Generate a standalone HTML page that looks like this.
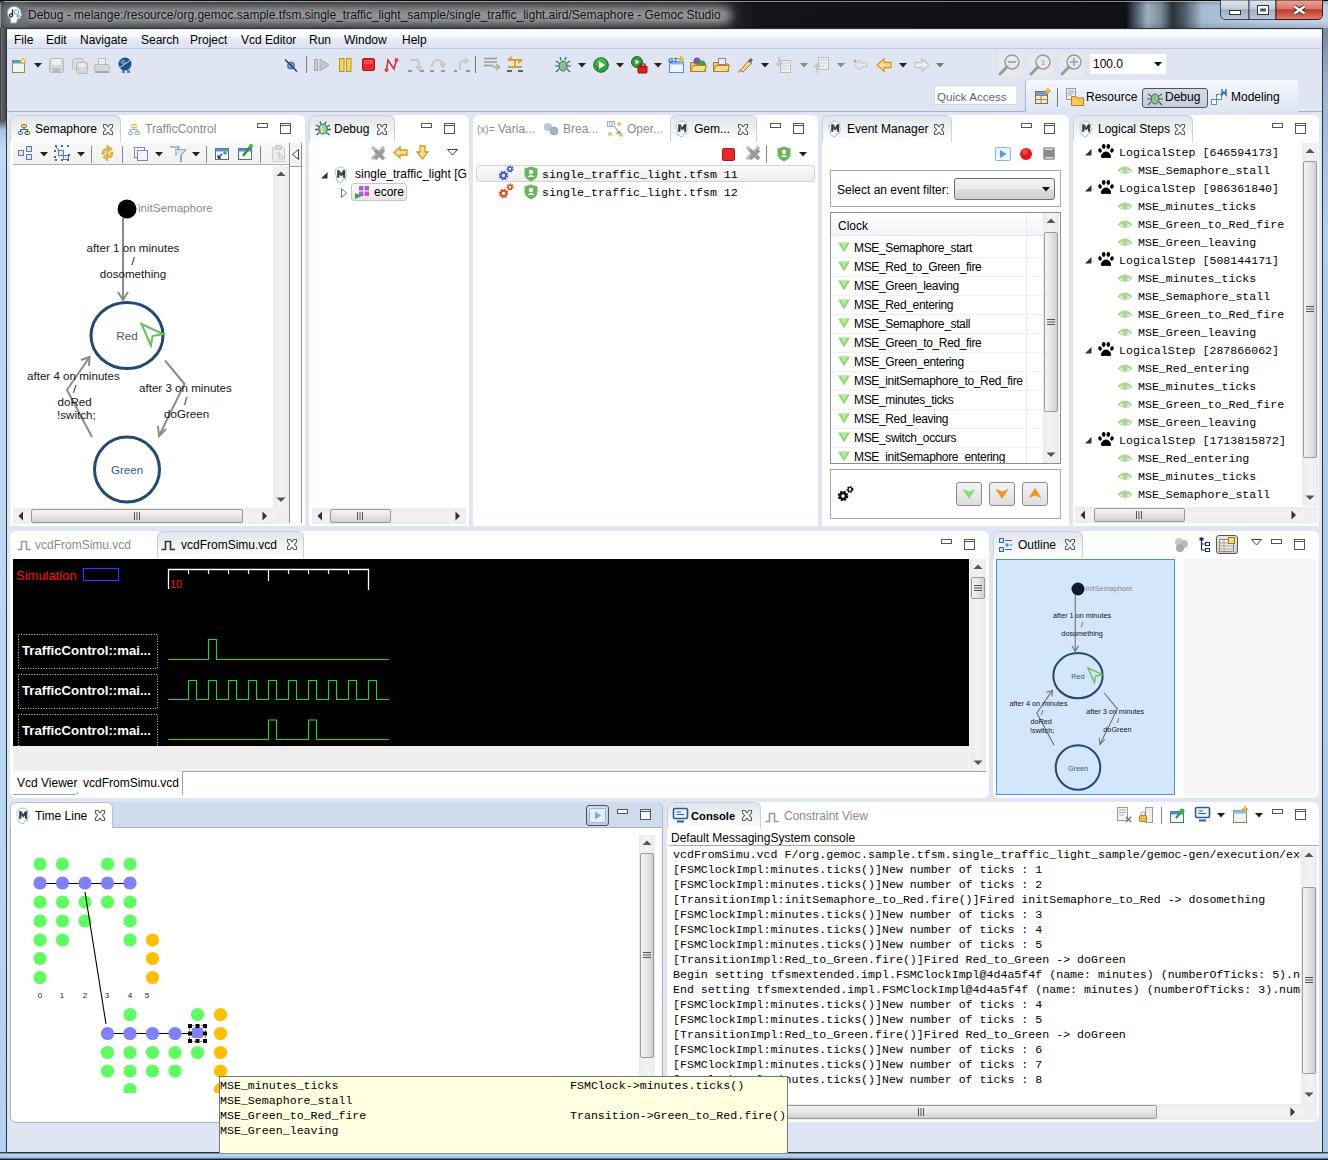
<!DOCTYPE html>
<html><head><meta charset="utf-8">
<style>
*{box-sizing:border-box;margin:0;padding:0}
html,body{width:1328px;height:1160px;overflow:hidden;background:#dfe5f3;font-family:"Liberation Sans",sans-serif;font-size:12px;color:#000}
.a{position:absolute}
.t{white-space:pre}
.panel{position:absolute;background:#fff;border-radius:6px 6px 0 0}
.tabact{border-radius:6px 6px 0 0;background:linear-gradient(180deg,#e2e4ea 0,#eef0f3 45%,#fff 100%);border:1px solid #cdd1db;border-bottom:none}
svg{overflow:visible}
</style></head><body>
<div class="a" style="left:0px;top:0px;width:1328px;height:30px;background:linear-gradient(90deg,#45484d 0%,#3f4247 40%,#34373b 53.5%,#1e2023 55.5%,#121417 57%,#0f1114 84.8%,#556270 85.6%,#9fb0c0 86.4%,#7d8c9a 87.4%,#2c333b 88.3%,#4f5d6a 89.2%,#a6bbd0 90.5%,#b6cce3 95%,#bcd2ea 100%)"></div>
<div class="a" style="left:0px;top:0px;width:1328px;height:30px;background:linear-gradient(180deg,rgba(0,0,0,.25) 0,rgba(0,0,0,0) 6px,rgba(0,0,0,0) 22px,rgba(0,0,0,.2) 30px)"></div>
<div class="a" style="left:16px;top:7px;width:716px;height:17px;background:#8e8f91;filter:blur(4px);border-radius:8px"></div>
<div class="a" style="left:1px;top:3px;width:28px;height:25px;background:#6e7176;filter:blur(3px);border-radius:8px"></div>
<div class="a" style="left:0px;top:0px;width:1328px;height:1px;background:#0a0a0a"></div>
<div class="a" style="left:4px;top:1px;width:1216px;height:1px;background:rgba(235,238,242,.55)"></div>
<div class="a" style="left:0px;top:3px;width:1px;height:26px;background:rgba(220,225,230,.45)"></div>
<div class="a t" style="left:28px;top:7.5px;height:15px;line-height:15px;font-size:12px;color:#111;font-weight:normal;font-family:'Liberation Sans',sans-serif;text-shadow:0 0 6px rgba(220,220,220,.8)">Debug - melange:/resource/org.gemoc.sample.tfsm.single_traffic_light_sample/single_traffic_light.aird/Semaphore - Gemoc Studio</div>
<svg class="a" style="left:6px;top:5px;" width="17" height="19" viewBox="0 0 17 19"><path d="M8 1.5 C12.5 1.5 15 4.5 15 8 L16 10.5 L14.5 11 L14.5 13.5 L11.5 14 L10.5 18 L4.5 18 L4.5 14 C2.5 12.5 1.5 10.5 1.5 8 C1.5 4 4 1.5 8 1.5Z" fill="#fbfdff" stroke="#7eaac8" stroke-width="0.9"/><path d="M6.5 4.5 V11" stroke="#222" stroke-width="1.3"/><circle cx="5" cy="10.5" r="1.6" fill="none" stroke="#222" stroke-width="1.1"/><circle cx="10.5" cy="7" r="2.2" fill="none" stroke="#6a9ac0" stroke-width="1"/><circle cx="12" cy="11" r="1.3" fill="none" stroke="#6a9ac0" stroke-width=".9"/></svg>
<svg class="a" style="left:1220px;top:0px;" width="103" height="20" viewBox="0 0 103 20">
<defs><linearGradient id="wb" x1="0" y1="0" x2="0" y2="1"><stop offset="0" stop-color="#dfe6ee"/><stop offset="0.45" stop-color="#c3cfdc"/><stop offset="0.5" stop-color="#9fb0c4"/><stop offset="1" stop-color="#b9c9da"/></linearGradient>
<linearGradient id="wc" x1="0" y1="0" x2="0" y2="1"><stop offset="0" stop-color="#eaa89c"/><stop offset="0.45" stop-color="#d8786a"/><stop offset="0.5" stop-color="#c0392b"/><stop offset="1" stop-color="#e0806a"/></linearGradient></defs>
<path d="M0.5 0 V14 Q0.5 19.5 6 19.5 H29 V0Z" fill="url(#wb)" stroke="#3d4550" stroke-width="1"/>
<rect x="29" y="0" width="27" height="19.5" fill="url(#wb)" stroke="#3d4550" stroke-width="1"/>
<path d="M56 0 V19.5 H97 Q102.5 19.5 102.5 14 V0Z" fill="url(#wc)" stroke="#3d1a14" stroke-width="1"/>
<rect x="9.5" y="10.5" width="11" height="4" fill="#fff" stroke="#333" stroke-width="1"/>
<rect x="37.5" y="5.5" width="11" height="9" fill="#fff" stroke="#333" stroke-width="1"/><rect x="40" y="8.5" width="6" height="3" fill="#4a5a70"/>
<path d="M74.5 6.5 L84.5 13.5 M84.5 6.5 L74.5 13.5" stroke="#3a3030" stroke-width="4"/><path d="M74.5 6.5 L84.5 13.5 M84.5 6.5 L74.5 13.5" stroke="#fff" stroke-width="2.2"/>
</svg>
<div class="a" style="left:0px;top:28px;width:7px;height:92px;background:linear-gradient(90deg,#2a2c30 0,#6a6e74 1.5px,#55595f 3px,#45494f 100%)"></div>
<div class="a" style="left:0px;top:120px;width:7px;height:1040px;background:linear-gradient(180deg,#4a4f56 0,#a8c8e8 10px,#bddaf4 30px,#b5d3f0 100%)"></div>
<div class="a" style="left:1322px;top:28px;width:6px;height:1132px;background:linear-gradient(180deg,#79889a 0,#9db6d0 60px,#b0cfee 200px,#a9c8e8 100%)"></div>
<div class="a" style="left:0px;top:1152px;width:1328px;height:8px;background:linear-gradient(180deg,#3a4450 0,#3a4450 1px,#bcdaf5 2px,#a2c2e2 6px,#222 7px)"></div>
<div class="a" style="left:6px;top:28px;width:1317px;height:1125px;border:1px solid #28323c;background:#dfe5f3"></div>
<div class="a" style="left:7px;top:30px;width:1315px;height:19px;background:linear-gradient(180deg,#ffffff 0,#f7f8fc 35%,#e4e8f4 55%,#dde3f1 100%);border-bottom:1px solid #c2cadb"></div>
<div class="a t" style="left:14px;top:32.5px;height:15px;line-height:15px;font-size:12px;color:#000;font-weight:normal;font-family:'Liberation Sans',sans-serif;">File</div>
<div class="a t" style="left:46px;top:32.5px;height:15px;line-height:15px;font-size:12px;color:#000;font-weight:normal;font-family:'Liberation Sans',sans-serif;">Edit</div>
<div class="a t" style="left:80px;top:32.5px;height:15px;line-height:15px;font-size:12px;color:#000;font-weight:normal;font-family:'Liberation Sans',sans-serif;">Navigate</div>
<div class="a t" style="left:141px;top:32.5px;height:15px;line-height:15px;font-size:12px;color:#000;font-weight:normal;font-family:'Liberation Sans',sans-serif;">Search</div>
<div class="a t" style="left:190px;top:32.5px;height:15px;line-height:15px;font-size:12px;color:#000;font-weight:normal;font-family:'Liberation Sans',sans-serif;">Project</div>
<div class="a t" style="left:241px;top:32.5px;height:15px;line-height:15px;font-size:12px;color:#000;font-weight:normal;font-family:'Liberation Sans',sans-serif;">Vcd Editor</div>
<div class="a t" style="left:309px;top:32.5px;height:15px;line-height:15px;font-size:12px;color:#000;font-weight:normal;font-family:'Liberation Sans',sans-serif;">Run</div>
<div class="a t" style="left:344px;top:32.5px;height:15px;line-height:15px;font-size:12px;color:#000;font-weight:normal;font-family:'Liberation Sans',sans-serif;">Window</div>
<div class="a t" style="left:402px;top:32.5px;height:15px;line-height:15px;font-size:12px;color:#000;font-weight:normal;font-family:'Liberation Sans',sans-serif;">Help</div>
<div class="a" style="left:7px;top:111px;width:1019px;height:1px;background:#a9b2c3"></div>
<svg class="a" style="left:12px;top:58px;" width="15" height="15" viewBox="0 0 15 15"><rect x="0.5" y="2.5" width="12" height="12" fill="#eef6fc" stroke="#a08a40"/><rect x="0.5" y="2.5" width="12" height="3" fill="#5a9ad6"/><path d="M11 0 L11 6 M8 3 L14 3" stroke="#e8b830" stroke-width="2.4"/><path d="M11 1 L11 5 M9 3 L13 3" stroke="#fff6c0" stroke-width="1"/></svg>
<svg class="a" style="left:34px;top:63px;" width="8" height="5" viewBox="0 0 8 5"><path d="M0 0 L8 0 L4 4.5 Z" fill="#222"/></svg>
<svg class="a" style="left:49px;top:58px;" width="15" height="15" viewBox="0 0 15 15"><rect x="0.5" y="0.5" width="14" height="14" rx="2" fill="#d6d6d6" stroke="#b8b8b8"/><rect x="3" y="1" width="9" height="6" fill="#f0f0f0"/><rect x="4" y="10" width="7" height="4" fill="#bbb"/></svg>
<svg class="a" style="left:72px;top:58px;" width="16" height="16" viewBox="0 0 16 16"><rect x="0.5" y="0.5" width="11" height="11" rx="2" fill="#ddd" stroke="#bbb"/><rect x="4.5" y="4.5" width="11" height="11" rx="2" fill="#d6d6d6" stroke="#b8b8b8"/><rect x="7" y="5" width="6" height="4" fill="#f0f0f0"/></svg>
<svg class="a" style="left:94px;top:58px;" width="16" height="16" viewBox="0 0 16 16"><rect x="4.5" y="0.5" width="7" height="7" fill="#eee" stroke="#bbb"/><rect x="0.5" y="6.5" width="15" height="7" rx="2" fill="#d8d8d8" stroke="#b8b8b8"/><rect x="1" y="13" width="14" height="2" fill="#aaa"/></svg>
<svg class="a" style="left:117px;top:57px;" width="17" height="17" viewBox="0 0 17 17"><circle cx="8" cy="7" r="6.5" fill="#1f4f8c"/><circle cx="6" cy="5" r="2.5" fill="#6a9ad0" opacity=".8"/><path d="M1 12 L15 2" stroke="#cfe0f0" stroke-width="1"/><rect x="5" y="13" width="3" height="3" fill="#5a80b8"/><rect x="10" y="13" width="3" height="3" fill="#5a80b8"/></svg>
<svg class="a" style="left:284px;top:58px;" width="14" height="14" viewBox="0 0 14 14"><circle cx="7" cy="7.5" r="3.5" fill="#6aa0c0" stroke="#3a6a90"/><path d="M1 1.5 L13 13.5" stroke="#1d3d8c" stroke-width="1.6"/></svg>
<div class="a" style="left:306px;top:56px;width:1px;height:17px;background:#777"></div>
<svg class="a" style="left:314px;top:58px;" width="16" height="14" viewBox="0 0 16 14"><rect x="0.5" y="1.5" width="3" height="11" fill="#ccc" stroke="#aaa"/><path d="M6 1 L15 7 L6 13Z" fill="#c6c6c6" stroke="#aaa"/></svg>
<svg class="a" style="left:339px;top:58px;" width="13" height="14" viewBox="0 0 13 14"><rect x="0.5" y="0.5" width="4.5" height="13" fill="#f3d75a" stroke="#b8941c"/><rect x="7.5" y="0.5" width="4.5" height="13" fill="#f3d75a" stroke="#b8941c"/></svg>
<svg class="a" style="left:362px;top:58px;" width="13" height="13" viewBox="0 0 13 13"><rect x="0.5" y="0.5" width="12" height="12" rx="1.5" fill="#e8282a" stroke="#a81818"/><rect x="2" y="2" width="9" height="4" fill="#f86a6a" opacity=".6"/></svg>
<svg class="a" style="left:384px;top:57px;" width="15" height="16" viewBox="0 0 15 16"><path d="M2.5 13 L4 3 L10 12 L12.5 3" fill="none" stroke="#d8282a" stroke-width="1.5"/><circle cx="2.5" cy="13" r="2" fill="#e84040"/><circle cx="12.5" cy="3" r="2" fill="#e84040"/></svg>
<svg class="a" style="left:408px;top:58px;" width="16" height="14" viewBox="0 0 16 14"><path d="M2 2 H8 Q11 2 11 6 V10" fill="none" stroke="#c8c8c8" stroke-width="2"/><path d="M8 8 L11 12 L14 8" fill="none" stroke="#c8c8c8" stroke-width="2"/><rect x="0" y="12" width="4" height="2" fill="#999"/><rect x="12" y="12" width="4" height="2" fill="#999"/></svg>
<svg class="a" style="left:430px;top:58px;" width="16" height="14" viewBox="0 0 16 14"><path d="M2 9 Q2 2 8 2 Q13 2 13 7" fill="none" stroke="#c8c8c8" stroke-width="2"/><path d="M10 5 L13 9 L16 5" fill="none" stroke="#c8c8c8" stroke-width="2"/><rect x="0" y="12" width="4" height="2" fill="#999"/><rect x="11" y="12" width="4" height="2" fill="#999"/></svg>
<svg class="a" style="left:454px;top:58px;" width="16" height="14" viewBox="0 0 16 14"><path d="M6 12 V7 Q6 3 10 3 H13" fill="none" stroke="#c8c8c8" stroke-width="2"/><path d="M11 0 L14 3 L11 6" fill="none" stroke="#c8c8c8" stroke-width="2"/><rect x="0" y="12" width="3" height="2" fill="#999"/><rect x="12" y="12" width="4" height="2" fill="#999"/></svg>
<div class="a" style="left:475px;top:56px;width:1px;height:17px;background:#777"></div>
<svg class="a" style="left:484px;top:57px;" width="17" height="16" viewBox="0 0 17 16"><path d="M0 1.5 H13 M0 5 H13 M0 8.5 H9" stroke="#999" stroke-width="1.6"/><path d="M9 10 H15 M12 7 L15.5 10 L12 13" fill="none" stroke="#aaa" stroke-width="1.6"/></svg>
<svg class="a" style="left:507px;top:57px;" width="17" height="16" viewBox="0 0 17 16"><path d="M1 3 H15 M1 3 L5 0 M15 3 L11 6 M1 10 H15" fill="none" stroke="#d8a020" stroke-width="1.8"/><path d="M8 3 V10" stroke="#d8a020" stroke-width="1.8"/><rect x="0" y="13" width="5" height="2" fill="#3a68a8"/><rect x="11" y="13" width="5" height="2" fill="#3a68a8"/></svg>
<svg class="a" style="left:555px;top:57px;" width="16" height="16" viewBox="0 0 16 16"><ellipse cx="8" cy="9" rx="4" ry="5" fill="#8cc08a" stroke="#2c6a5a"/><path d="M1 4 L4 6 M15 4 L12 6 M0 9 H4 M16 9 H12 M1 15 L4 12 M15 15 L12 12 M6 3 L5 0 M10 3 L11 0" stroke="#2c6a5a" stroke-width="1.2"/></svg>
<svg class="a" style="left:578px;top:63px;" width="8" height="5" viewBox="0 0 8 5"><path d="M0 0 L8 0 L4 4.5 Z" fill="#222"/></svg>
<svg class="a" style="left:593px;top:57px;" width="16" height="16" viewBox="0 0 16 16"><circle cx="8" cy="8" r="7.3" fill="#2ea03a" stroke="#1a6a24"/><circle cx="8" cy="6" r="5" fill="#5ccf5a" opacity=".5"/><path d="M6 4 L12 8 L6 12Z" fill="#fff"/></svg>
<svg class="a" style="left:616px;top:63px;" width="8" height="5" viewBox="0 0 8 5"><path d="M0 0 L8 0 L4 4.5 Z" fill="#222"/></svg>
<svg class="a" style="left:631px;top:56px;" width="17" height="18" viewBox="0 0 17 18"><circle cx="6" cy="6" r="5.5" fill="#2ea03a" stroke="#1a6a24"/><path d="M4.5 3.5 L8.5 6 L4.5 8.5Z" fill="#fff"/><rect x="7" y="10" width="9" height="7" rx="1" fill="#e02020" stroke="#901010"/><rect x="9" y="8" width="5" height="3" fill="none" stroke="#901010"/></svg>
<svg class="a" style="left:654px;top:63px;" width="8" height="5" viewBox="0 0 8 5"><path d="M0 0 L8 0 L4 4.5 Z" fill="#222"/></svg>
<svg class="a" style="left:668px;top:56px;" width="17" height="17" viewBox="0 0 17 17"><rect x="1.5" y="5.5" width="14" height="11" fill="#eef6fd" stroke="#5a8ac8"/><rect x="1.5" y="5.5" width="14" height="3" fill="#8ab8e8"/><text x="0" y="7" font-size="7" font-family="Liberation Sans" font-weight="bold" fill="#2a6ad0">GT</text><path d="M13 0 V6 M10 3 H16" stroke="#e8b830" stroke-width="2"/></svg>
<svg class="a" style="left:690px;top:57px;" width="17" height="15" viewBox="0 0 17 15"><path d="M0.5 5.5 H6 L7 7 H15.5 V14.5 H0.5Z" fill="#f0c860" stroke="#b08020"/><circle cx="7" cy="4" r="3.5" fill="#7a58b0"/><circle cx="12" cy="7" r="3.5" fill="#3aa040"/><path d="M0.5 14.5 L3 8.5 H16.5 L14.5 14.5Z" fill="#f8dc88" stroke="#b08020"/></svg>
<svg class="a" style="left:713px;top:58px;" width="17" height="14" viewBox="0 0 17 14"><path d="M0.5 4.5 H6 L7 6 H15.5 V13.5 H0.5Z" fill="#f0c860" stroke="#b08020"/><rect x="5.5" y="0.5" width="7" height="6" fill="#eee" stroke="#888"/><path d="M0.5 13.5 L3 7.5 H16.5 L14.5 13.5Z" fill="#f8dc88" stroke="#b08020"/></svg>
<svg class="a" style="left:737px;top:57px;" width="17" height="17" viewBox="0 0 17 17"><path d="M1 16 L4 12" stroke="#d8b070" stroke-width="2"/><path d="M3 14 L12 3 L15 6 L6 15Z" fill="#f0d890" stroke="#a88040"/><path d="M11 4 L14 1 L16 3 L13 6Z" fill="#666"/></svg>
<svg class="a" style="left:761px;top:63px;" width="8" height="5" viewBox="0 0 8 5"><path d="M0 0 L8 0 L4 4.5 Z" fill="#222"/></svg>
<svg class="a" style="left:776px;top:57px;" width="16" height="16" viewBox="0 0 16 16"><rect x="4.5" y="3.5" width="10" height="12" fill="#f0f0f0" stroke="#bbb"/><path d="M5 6 H13 M5 9 H13 M5 12 H11" stroke="#ccc"/><path d="M3 0 V9 M0 6 L3 9 L6 6" fill="none" stroke="#c8c8c8" stroke-width="2"/></svg>
<svg class="a" style="left:800px;top:63px;" width="8" height="5" viewBox="0 0 8 5"><path d="M0 0 L8 0 L4 4.5 Z" fill="#888"/></svg>
<svg class="a" style="left:814px;top:57px;" width="16" height="16" viewBox="0 0 16 16"><rect x="4.5" y="0.5" width="10" height="12" fill="#f0f0f0" stroke="#bbb"/><path d="M5 3 H13 M5 6 H13 M5 9 H11" stroke="#ccc"/><path d="M3 16 V7 M0 10 L3 7 L6 10" fill="none" stroke="#c8c8c8" stroke-width="2"/></svg>
<svg class="a" style="left:837px;top:63px;" width="8" height="5" viewBox="0 0 8 5"><path d="M0 0 L8 0 L4 4.5 Z" fill="#888"/></svg>
<svg class="a" style="left:852px;top:58px;" width="16" height="14" viewBox="0 0 16 14"><path d="M8 2 L2 7 L8 12 V9 H15 V5 H8Z" fill="#e8e8e8" stroke="#c4c4c4"/><circle cx="3" cy="3" r="1.5" fill="#aaa"/></svg>
<svg class="a" style="left:876px;top:58px;" width="16" height="14" viewBox="0 0 16 14"><path d="M8 1 L1 7 L8 13 V9.5 H15 V4.5 H8Z" fill="#fbe09a" stroke="#d89818" stroke-width="1.3"/></svg>
<svg class="a" style="left:899px;top:63px;" width="8" height="5" viewBox="0 0 8 5"><path d="M0 0 L8 0 L4 4.5 Z" fill="#222"/></svg>
<svg class="a" style="left:914px;top:58px;" width="16" height="14" viewBox="0 0 16 14"><path d="M8 1 L15 7 L8 13 V9.5 H1 V4.5 H8Z" fill="#f0f0f0" stroke="#c4c4c4" stroke-width="1.3"/></svg>
<svg class="a" style="left:936px;top:63px;" width="8" height="5" viewBox="0 0 8 5"><path d="M0 0 L8 0 L4 4.5 Z" fill="#777"/></svg>
<div class="a" style="left:998px;top:53px;width:24px;height:24px;background:#e8e8ee"></div>
<svg class="a" style="left:998px;top:53px;" width="24" height="24" viewBox="0 0 24 24"><circle cx="14" cy="9" r="7" fill="none" stroke="#9a9a9a" stroke-width="1.5"/><path d="M9 14 L2 21" stroke="#9a9a9a" stroke-width="3" stroke-linecap="round"/><path d="M10 9 H18" stroke="#9a9a9a" stroke-width="1.5"/></svg>
<div class="a" style="left:1029px;top:53px;width:24px;height:24px;background:#e8e8ee"></div>
<svg class="a" style="left:1029px;top:53px;" width="24" height="24" viewBox="0 0 24 24"><circle cx="14" cy="9" r="7" fill="none" stroke="#9a9a9a" stroke-width="1.5"/><path d="M9 14 L2 21" stroke="#9a9a9a" stroke-width="3" stroke-linecap="round"/><text x="12" y="12" font-size="8" font-family="Liberation Sans" fill="#9a9a9a">1</text></svg>
<div class="a" style="left:1060px;top:53px;width:24px;height:24px;background:#e8e8ee"></div>
<svg class="a" style="left:1060px;top:53px;" width="24" height="24" viewBox="0 0 24 24"><circle cx="14" cy="9" r="7" fill="none" stroke="#9a9a9a" stroke-width="1.5"/><path d="M9 14 L2 21" stroke="#9a9a9a" stroke-width="3" stroke-linecap="round"/><path d="M10 9 H18 M14 5 V13" stroke="#9a9a9a" stroke-width="1.5"/></svg>
<div class="a" style="left:1089px;top:53px;width:78px;height:22px;background:#fff;border:1px solid #e3e6ee"></div>
<div class="a t" style="left:1093px;top:56.5px;height:15px;line-height:15px;font-size:12px;color:#000;font-weight:normal;font-family:'Liberation Sans',sans-serif;">100.0</div>
<svg class="a" style="left:1154px;top:62px;" width="8" height="5" viewBox="0 0 8 5"><path d="M0 0 L8 0 L4 4.5 Z" fill="#111"/></svg>
<div class="a" style="left:934px;top:85px;width:83px;height:20px;background:#fff;border:1px solid #d0d6e4;border-right:1px solid #e0e4ee"></div>
<div class="a t" style="left:937px;top:89.0px;height:15px;line-height:15px;font-size:11.6px;color:#5a6478;font-weight:normal;font-family:'Liberation Sans',sans-serif;">Quick Access</div>
<div class="a" style="left:1025px;top:80px;width:273px;height:32px;background:linear-gradient(180deg,#f6f8fd,#e9edf8 50%,#dfe5f3);border-left:1px solid #a9b2c3;border-radius:3px 0 0 0"></div>
<div class="a" style="left:1298px;top:111px;width:24px;height:1px;background:#a9b2c3"></div>
<svg class="a" style="left:1035px;top:88px;" width="16" height="16" viewBox="0 0 16 16"><rect x="0.5" y="3.5" width="12" height="12" fill="#f4ead0" stroke="#8a7030"/><path d="M0.5 7.5 H12.5 M6 7.5 V15.5 M0.5 11.5 H12.5" stroke="#8a7030" stroke-width=".8"/><rect x="1" y="4" width="11" height="3" fill="#6aa0d8"/><path d="M13 0 V6 M10 3 H16" stroke="#e8b830" stroke-width="2"/></svg>
<div class="a" style="left:1057px;top:88px;width:1px;height:19px;background:#777"></div>
<svg class="a" style="left:1066px;top:88px;" width="18" height="18" viewBox="0 0 18 18"><rect x="0.5" y="0.5" width="9" height="11" fill="#eee" stroke="#999"/><path d="M2 3 H8 M2 5 H8 M2 7 H6" stroke="#7a9ad0" stroke-width=".8"/><path d="M5.5 8.5 H10 L11 10 H17.5 V17.5 H5.5Z" fill="#f8c850" stroke="#b88020"/></svg>
<div class="a t" style="left:1086px;top:89.5px;height:15px;line-height:15px;font-size:12px;color:#000;font-weight:normal;font-family:'Liberation Sans',sans-serif;">Resource</div>
<div class="a" style="left:1142px;top:88px;width:66px;height:20px;background:linear-gradient(180deg,#d6dbe6,#c6ccd9);border:1px solid #4f5562;border-radius:3px"></div>
<svg class="a" style="left:1146px;top:89px;" width="17" height="17" viewBox="0 0 17 17"><ellipse cx="9" cy="10" rx="4" ry="5" fill="#8cc08a" stroke="#2c6a5a"/><path d="M2 5 L5 7 M16 5 L13 7 M1 10 H5 M17 10 H13 M2 16 L5 13 M16 16 L13 13" stroke="#2c6a5a" stroke-width="1.2"/></svg>
<div class="a t" style="left:1165px;top:90.0px;height:15px;line-height:15px;font-size:12px;color:#000;font-weight:normal;font-family:'Liberation Sans',sans-serif;">Debug</div>
<svg class="a" style="left:1210px;top:88px;" width="20" height="19" viewBox="0 0 20 19"><rect x="1.5" y="11.5" width="5" height="5" fill="#fff" stroke="#5a8ac8"/><rect x="6.5" y="6.5" width="5" height="5" fill="#fff" stroke="#5a8ac8"/><path d="M12 1 V7 L14 4 L16 7 V1" fill="none" stroke="#2a5aa8" stroke-width="1.3"/></svg>
<div class="a t" style="left:1231px;top:89.5px;height:15px;line-height:15px;font-size:12px;color:#000;font-weight:normal;font-family:'Liberation Sans',sans-serif;">Modeling</div>
<div class="panel" style="left:10px;top:115px;width:295px;height:411px;border-radius:6px 6px 0 0"></div>
<div class="panel" style="left:309px;top:115px;width:160px;height:411px;border-radius:6px 6px 0 0"></div>
<div class="panel" style="left:473px;top:115px;width:345px;height:411px;border-radius:6px 6px 0 0"></div>
<div class="panel" style="left:822px;top:115px;width:247px;height:411px;border-radius:6px 6px 0 0"></div>
<div class="panel" style="left:1073px;top:115px;width:246px;height:411px;border-radius:6px 6px 0 0"></div>
<div class="panel" style="left:10px;top:531px;width:979px;height:267px;border-radius:6px"></div>
<div class="panel" style="left:993px;top:531px;width:326px;height:267px;border-radius:6px"></div>
<div class="panel" style="left:10px;top:802px;width:652px;height:320px;border-radius:6px"></div>
<div class="a" style="left:10px;top:802px;width:653px;height:321px;border:1px solid #a9b2c6;border-radius:6px"></div>
<div class="panel" style="left:667px;top:802px;width:652px;height:320px;border-radius:6px"></div>
<div class="a tabact" style="left:10px;top:115px;width:111px;height:27px"></div>
<svg class="a" style="left:18px;top:124px;" width="12" height="11" viewBox="0 0 12 11"><rect x="3.5" y="0.5" width="5" height="3" rx="1" fill="#f8d050" stroke="#a87818"/><path d="M6 3.5 V5.5 M2.5 5.5 H9.5 M2.5 5.5 V7 M9.5 5.5 V7" fill="none" stroke="#3a5aa0"/><rect x="0.5" y="7.5" width="4" height="3" rx="1" fill="#c8dcf0" stroke="#3a5aa0"/><rect x="7" y="7.5" width="4.5" height="3" rx="1" fill="#e8e040" stroke="#1a7a30"/></svg>
<div class="a t" style="left:35px;top:121.5px;height:15px;line-height:15px;font-size:12px;color:#000;font-weight:normal;font-family:'Liberation Sans',sans-serif;">Semaphore</div>
<svg class="a" style="left:101.5px;top:124px;" width="12" height="12" viewBox="0 0 12 12"><path d="M1.5 0.5 H4 L6 2.8 L8 0.5 H10.5 V3 L8.3 5.5 L10.5 8 V10.5 H8 L6 8.2 L4 10.5 H1.5 V8 L3.7 5.5 L1.5 3Z" fill="#fff" stroke="#5e5e5e" stroke-width="1.1"/></svg>
<svg class="a" style="left:128px;top:124px;" width="12" height="11" viewBox="0 0 12 11"><rect x="3.5" y="0.5" width="5" height="3" rx="1" fill="#fbe8a8" stroke="#d8b868"/><path d="M6 3.5 V5.5 M2.5 5.5 H9.5 M2.5 5.5 V7 M9.5 5.5 V7" fill="none" stroke="#98acd0"/><rect x="0.5" y="7.5" width="4" height="3" rx="1" fill="#e0ecf8" stroke="#98acd0"/><rect x="7" y="7.5" width="4.5" height="3" rx="1" fill="#f0ec98" stroke="#88c098"/></svg>
<div class="a t" style="left:145px;top:121.5px;height:15px;line-height:15px;font-size:12px;color:#8a8a8a;font-weight:normal;font-family:'Liberation Sans',sans-serif;">TrafficControl</div>
<svg class="a" style="left:257px;top:123px;" width="34" height="12" viewBox="0 0 34 12"><rect x="0.5" y="0.5" width="10" height="4" fill="#fff" stroke="#555" stroke-width="1"/><rect x="23.5" y="0.5" width="10" height="10" fill="#fff" stroke="#555" stroke-width="1"/><line x1="23" y1="2.5" x2="34" y2="2.5" stroke="#555" stroke-width="1"/></svg>
<div class="a" style="left:13px;top:143px;width:276px;height:22px;background:linear-gradient(180deg,#f8f8f8,#f0f0f0);border-bottom:1px solid #b0b0b0"></div>
<svg class="a" style="left:18px;top:146px;" width="15" height="15" viewBox="0 0 15 15"><rect x="0.5" y="4.5" width="5" height="5" fill="#dde8f2" stroke="#5a7ab8"/><rect x="8.5" y="0.5" width="5" height="5" fill="#dde8f2" stroke="#5a7ab8"/><rect x="8.5" y="8.5" width="5" height="5" fill="#dde8f2" stroke="#5a7ab8"/></svg>
<svg class="a" style="left:40px;top:152px;" width="8" height="5" viewBox="0 0 8 5"><path d="M0 0 L8 0 L4 4.5 Z" fill="#222"/></svg>
<svg class="a" style="left:54px;top:145px;" width="16" height="16" viewBox="0 0 16 16"><path d="M2 2 L14 14" stroke="#5a7ab8"/><rect x="4.5" y="5.5" width="5" height="5" fill="#dde8f2" stroke="#5a7ab8"/><rect x="9.5" y="10.5" width="5" height="4" fill="#dde8f2" stroke="#5a7ab8"/><path d="M1 1 H3 M7 1 H9 M13 1 H15 M1 5 V7 M1 11 V13 M15 9 V11 M1 15 H3 M7 15 H9 M13 15 H15" stroke="#1a3a8a" stroke-width="1.6"/></svg>
<svg class="a" style="left:77px;top:152px;" width="8" height="5" viewBox="0 0 8 5"><path d="M0 0 L8 0 L4 4.5 Z" fill="#222"/></svg>
<div class="a" style="left:91px;top:146px;width:1px;height:17px;background:#888"></div>
<svg class="a" style="left:100px;top:145px;" width="15" height="16" viewBox="0 0 15 16"><path d="M2 9 Q2 3 8 3 L7 0 L12 4 L7 8 L8 5 Q4 5 4 9Z" fill="#f0c030" stroke="#c08010" stroke-width=".6"/><path d="M13 7 Q13 13 7 13 L8 16 L3 12 L8 8 L7 11 Q11 11 11 7Z" fill="#f0c030" stroke="#c08010" stroke-width=".6"/></svg>
<div class="a" style="left:122px;top:146px;width:1px;height:17px;background:#888"></div>
<svg class="a" style="left:134px;top:147px;" width="15" height="14" viewBox="0 0 15 14"><rect x="0.5" y="0.5" width="10" height="10" fill="#f2f6fa" stroke="#7a8ab0"/><rect x="3.5" y="3.5" width="10" height="10" fill="#f2f6fa" stroke="#7a8ab0"/></svg>
<svg class="a" style="left:155px;top:152px;" width="8" height="5" viewBox="0 0 8 5"><path d="M0 0 L8 0 L4 4.5 Z" fill="#222"/></svg>
<svg class="a" style="left:170px;top:146px;" width="16" height="16" viewBox="0 0 16 16"><path d="M0 1 H9 L6 6 V10" fill="none" stroke="#8ab0c8" stroke-width="1.5"/><path d="M5 4 H15 L11 9 V16" fill="none" stroke="#6a9ab8" stroke-width="1.6"/><path d="M5 4 H15 L11 9 H9Z" fill="#cfe4f0"/></svg>
<svg class="a" style="left:192px;top:152px;" width="8" height="5" viewBox="0 0 8 5"><path d="M0 0 L8 0 L4 4.5 Z" fill="#222"/></svg>
<div class="a" style="left:206px;top:146px;width:1px;height:17px;background:#888"></div>
<svg class="a" style="left:215px;top:146px;" width="15" height="15" viewBox="0 0 15 15"><rect x="0.5" y="2.5" width="13" height="11" fill="#fff" stroke="#4a6a9a"/><rect x="0.5" y="2.5" width="13" height="3" fill="#5a8ad0"/><path d="M3 12 L7 8 M3 12 V9 M3 12 H6" stroke="#1a3a8a" stroke-width="1.3"/><circle cx="10" cy="7" r="1.8" fill="#3ab040"/></svg>
<svg class="a" style="left:238px;top:144px;" width="16" height="17" viewBox="0 0 16 17"><rect x="0.5" y="4.5" width="13" height="11" fill="#fff" stroke="#4a6a9a"/><rect x="0.5" y="4.5" width="13" height="3" fill="#5a8ad0"/><path d="M5 12 L12 3" stroke="#2a9a30" stroke-width="2.5"/><circle cx="13" cy="2" r="2" fill="#3ab040"/></svg>
<div class="a" style="left:260px;top:146px;width:1px;height:17px;background:#888"></div>
<svg class="a" style="left:272px;top:145px;" width="14" height="17" viewBox="0 0 14 17"><rect x="0.5" y="2.5" width="12" height="14" rx="1" fill="#eee" stroke="#c8c8c8"/><rect x="3.5" y="0.5" width="6" height="4" rx="1" fill="#ddd" stroke="#c0c0c0"/><path d="M4 8 H8 V10 H6 M7 11 H11 V14 H7Z" fill="none" stroke="#bbb" stroke-width=".8"/></svg>
<div class="a" style="left:289px;top:143px;width:1px;height:380px;background:#909090"></div>
<div class="a" style="left:301px;top:143px;width:1px;height:380px;background:#909090"></div>
<div class="a" style="left:290px;top:143px;width:11px;height:24px;background:#f2f2f2;border-bottom:1px solid #a0a0a0"></div>
<svg class="a" style="left:292px;top:149px;" width="7" height="11" viewBox="0 0 7 11"><path d="M6.5 0.5 L0.5 5.5 L6.5 10.5Z" fill="#fff" stroke="#444"/></svg>
<div class="a" style="left:273px;top:166px;width:16px;height:342px;background:linear-gradient(90deg,#ebebeb,#f3f3f3 50%,#ececec)"></div>
<svg class="a" style="left:273px;top:171px;" width="16" height="6" viewBox="0 0 16 6"><path d="M3.5 5 L8 0.5 L12.5 5Z" fill="#555"/></svg>
<svg class="a" style="left:273px;top:497px;" width="16" height="6" viewBox="0 0 16 6"><path d="M3.5 0.5 L12.5 0.5 L8 5Z" fill="#555"/></svg>
<div class="a" style="left:13px;top:508px;width:260px;height:16px;background:linear-gradient(180deg,#ebebeb,#f3f3f3 50%,#ececec)"></div>
<svg class="a" style="left:18px;top:508px;" width="6" height="16" viewBox="0 0 6 16"><path d="M5 3.5 L0.5 8 L5 12.5Z" fill="#333"/></svg>
<svg class="a" style="left:262px;top:508px;" width="6" height="16" viewBox="0 0 6 16"><path d="M0.5 3.5 L5 8 L0.5 12.5Z" fill="#333"/></svg>
<div class="a" style="left:31px;top:509px;width:212px;height:14px;border:1px solid #9a9a9a;border-radius:2px;background:linear-gradient(180deg,#f4f4f4,#e6e6e6 50%,#cfcfcf)"></div>
<svg class="a" style="left:133px;top:512px;" width="8" height="8" viewBox="0 0 8 8"><path d="M1.5 0 V8 M4 0 V8 M6.5 0 V8" stroke="#555" stroke-width="1"/></svg>
<div class="a" style="left:273px;top:508px;width:16px;height:16px;background:#efefef"></div>
<div class="a" style="left:13px;top:166px;width:260px;height:342px;overflow:hidden;background:#fff">
<svg style="position:absolute;left:-13px;top:-166px;font-family:Liberation Sans" width="300" height="560" viewBox="0 0 300 560"><circle cx="127" cy="209" r="9.5" fill="#000"/><text x="138" y="211.5" font-size="11.6" fill="#8a8a8a">initSemaphore</text><path d="M123 218 V300" stroke="#8c8c8c" stroke-width="2"/><path d="M118 292 L123 300 L128 292" fill="none" stroke="#8c8c8c" stroke-width="2"/><ellipse cx="127" cy="335.5" rx="36" ry="33" fill="#fff" stroke="#244a73" stroke-width="3"/><circle cx="127" cy="469.6" r="32.5" fill="#fff" stroke="#244a73" stroke-width="3"/><text x="127" y="340" font-size="11.6" fill="#3b5a82" text-anchor="middle">Red</text><text x="127" y="474" font-size="11.6" fill="#3b5a82" text-anchor="middle">Green</text><path d="M141.5 324 L163 334 L152.5 336 L151 345.5Z" fill="#fff" stroke="#6cbd5c" stroke-width="2" stroke-linejoin="miter"/><path d="M165 360.5 L184.5 384 L159 436" fill="none" stroke="#8c8c8c" stroke-width="2"/><path d="M158 426 L159 436 L166 429" fill="none" stroke="#8c8c8c" stroke-width="2"/><path d="M92 437 L67 390 L89.5 357" fill="none" stroke="#8c8c8c" stroke-width="2"/><path d="M81 360 L89.5 357 L89 366" fill="none" stroke="#8c8c8c" stroke-width="2"/><text x="133" y="252" font-size="11.6" fill="#161616" text-anchor="middle">after 1 on minutes</text><text x="133" y="265" font-size="11.6" fill="#161616" text-anchor="middle">/</text><text x="133" y="278" font-size="11.6" fill="#161616" text-anchor="middle">dosomething</text><text x="27" y="380" font-size="11.6" fill="#161616" text-anchor="start">after 4 on minutes</text><text x="73" y="393" font-size="11.6" fill="#161616" text-anchor="start">/</text><text x="57.5" y="406" font-size="11.6" fill="#161616" text-anchor="start">doRed</text><text x="57" y="419" font-size="11.6" fill="#161616" text-anchor="start">!switch;</text><text x="139" y="392" font-size="11.6" fill="#161616" text-anchor="start">after 3 on minutes</text><text x="184" y="405" font-size="11.6" fill="#161616" text-anchor="start">/</text><text x="164" y="418" font-size="11.6" fill="#161616" text-anchor="start">doGreen</text></svg>
</div>
<div class="a tabact" style="left:309px;top:115px;width:86px;height:27px"></div>
<svg class="a" style="left:315px;top:121px;" width="16" height="16" viewBox="0 0 16 16"><ellipse cx="8" cy="8" rx="4.2" ry="5" fill="#a8d090" stroke="#2a6a60" stroke-width="1"/><path d="M6 5 Q8 9 7 12" stroke="#e8f4e0" stroke-width="1" fill="none"/><path d="M1 4 L4.5 6 M15 4 L11.5 6 M0 8.5 H4 M16 8.5 H12 M1.5 14 L4.5 11.5 M14.5 14 L11.5 11.5 M6 3 L5 0.5 M10 3 L11 0.5" stroke="#2a6a60" stroke-width="1.3"/></svg>
<div class="a t" style="left:334px;top:121.5px;height:15px;line-height:15px;font-size:12px;color:#000;font-weight:normal;font-family:'Liberation Sans',sans-serif;">Debug</div>
<svg class="a" style="left:376px;top:124px;" width="12" height="12" viewBox="0 0 12 12"><path d="M1.5 0.5 H4 L6 2.8 L8 0.5 H10.5 V3 L8.3 5.5 L10.5 8 V10.5 H8 L6 8.2 L4 10.5 H1.5 V8 L3.7 5.5 L1.5 3Z" fill="#fff" stroke="#5e5e5e" stroke-width="1.1"/></svg>
<svg class="a" style="left:421px;top:123px;" width="34" height="12" viewBox="0 0 34 12"><rect x="0.5" y="0.5" width="10" height="4" fill="#fff" stroke="#555" stroke-width="1"/><rect x="23.5" y="0.5" width="10" height="10" fill="#fff" stroke="#555" stroke-width="1"/><line x1="23" y1="2.5" x2="34" y2="2.5" stroke="#555" stroke-width="1"/></svg>
<svg class="a" style="left:370px;top:145px;" width="16" height="16" viewBox="0 0 16 16"><path d="M2 2 L14 14 M14 2 L2 14" stroke="#bcbcbc" stroke-width="3.5"/><path d="M5 5 L14 14 M14 5 L5 14" stroke="#999" stroke-width="3.5"/></svg>
<svg class="a" style="left:393px;top:146px;" width="15" height="13" viewBox="0 0 15 13"><path d="M7 1 L1 6.5 L7 12 V9 H14 V4 H7Z" fill="#fbe09a" stroke="#d89818" stroke-width="1.3"/></svg>
<svg class="a" style="left:416px;top:145px;" width="13" height="15" viewBox="0 0 13 15"><path d="M1 7 L6.5 14 L12 7 H9 V1 H4 V7Z" fill="#fbe09a" stroke="#d89818" stroke-width="1.3"/></svg>
<svg class="a" style="left:447px;top:149px;" width="11" height="7" viewBox="0 0 11 7"><path d="M0.5 0.5 H10.5 L5.5 6Z" fill="#fff" stroke="#444"/></svg>
<svg class="a" style="left:321px;top:172px;" width="7" height="7" viewBox="0 0 7 7"><path d="M6.5 0 V6.5 H0Z" fill="#333"/></svg>
<svg class="a" style="left:334px;top:166px;" width="14" height="18" viewBox="0 0 14 18"><path d="M5.1 1.2 H8.5 L10.4 2.4 L11.7 3.5 L11.6 7.1 L12.6 8.4 L12.7 9.8 L11.6 10.9 L11.6 13.6 L9.1 13.6 L7.4 16.6 L5.5 16.6 L2.3 14.1 L2.3 9.8 L1.1 8.6 L1.1 4.3 L2.6 3.1 L3.6 2.2Z" fill="#fafcfd" stroke="#8fbcd0" stroke-width="0.9"/><path d="M3.2 4.3 H5.6 L7.3 7.2 L9 4.3 H11.1 V11.7 H9 V8.4 L7.3 10.6 L5.4 8.4 V11.7 H3.2Z" fill="#3a3a3a"/><path d="M3.6 4.8 H5.2 L7.2 8 L6 9 L5 7.5 V6Z" fill="#777" opacity=".6"/></svg>
<div class="a t" style="left:355px;top:166.5px;height:15px;line-height:15px;font-size:12px;color:#000;font-weight:normal;font-family:'Liberation Sans',sans-serif;">single_traffic_light [G</div>
<svg class="a" style="left:341px;top:188px;" width="6" height="10" viewBox="0 0 6 10"><path d="M0.5 0.5 L5.5 5 L0.5 9.5Z" fill="#fff" stroke="#777"/></svg>
<div class="a" style="left:351px;top:183px;width:56px;height:18px;background:linear-gradient(180deg,#fafafa,#e6e6e6);border:1px solid #c6c6c6;border-radius:3px"></div>
<svg class="a" style="left:354px;top:184px;" width="16" height="16" viewBox="0 0 16 16"><rect x="5" y="2" width="10" height="10" fill="#b060c8"/><path d="M10 1 V13 M4 7 H16" stroke="#fff" stroke-width="1"/><path d="M1 9 L8 12 L1 15Z" fill="#3aa040"/></svg>
<div class="a t" style="left:374px;top:184.5px;height:15px;line-height:15px;font-size:12px;color:#000;font-weight:normal;font-family:'Liberation Sans',sans-serif;">ecore</div>
<div class="a" style="left:312px;top:508px;width:154px;height:16px;background:linear-gradient(180deg,#ebebeb,#f3f3f3 50%,#ececec)"></div>
<svg class="a" style="left:317px;top:508px;" width="6" height="16" viewBox="0 0 6 16"><path d="M5 3.5 L0.5 8 L5 12.5Z" fill="#333"/></svg>
<svg class="a" style="left:455px;top:508px;" width="6" height="16" viewBox="0 0 6 16"><path d="M0.5 3.5 L5 8 L0.5 12.5Z" fill="#333"/></svg>
<div class="a" style="left:330px;top:509px;width:61px;height:14px;border:1px solid #9a9a9a;border-radius:2px;background:linear-gradient(180deg,#f4f4f4,#e6e6e6 50%,#cfcfcf)"></div>
<svg class="a" style="left:356px;top:512px;" width="8" height="8" viewBox="0 0 8 8"><path d="M1.5 0 V8 M4 0 V8 M6.5 0 V8" stroke="#555" stroke-width="1"/></svg>
<div class="a t" style="left:477px;top:122.5px;height:13px;line-height:13px;font-size:10px;color:#8a8a8a;font-weight:normal;font-family:'Liberation Sans',sans-serif;">(x)=</div>
<div class="a t" style="left:498px;top:121.5px;height:15px;line-height:15px;font-size:12px;color:#8a8a8a;font-weight:normal;font-family:'Liberation Sans',sans-serif;">Varia...</div>
<svg class="a" style="left:543px;top:122px;" width="16" height="14" viewBox="0 0 16 14"><circle cx="5" cy="5" r="4" fill="#b8c8d8"/><circle cx="11" cy="9" r="4" fill="#9ab8d0" stroke="#7a98b8" stroke-width=".6"/></svg>
<div class="a t" style="left:563px;top:121.5px;height:15px;line-height:15px;font-size:12px;color:#8a8a8a;font-weight:normal;font-family:'Liberation Sans',sans-serif;">Brea...</div>
<svg class="a" style="left:606px;top:120px;" width="18" height="18" viewBox="0 0 18 18"><rect x="1.5" y="1.5" width="7" height="5" fill="#fff" stroke="#9ab0c8"/><path d="M3 3 H7 M3 5 H7" stroke="#9ab0c8"/><circle cx="13" cy="4" r="2" fill="#f0c060"/><circle cx="4" cy="14" r="2" fill="#f0c060"/><path d="M9 7 L12 12" stroke="#88a" /><path d="M10 14 L13 10 L16 14Z" fill="#6ab0d8"/><circle cx="15" cy="15" r="2" fill="#f0c060"/></svg>
<div class="a t" style="left:627px;top:121.5px;height:15px;line-height:15px;font-size:12px;color:#8a8a8a;font-weight:normal;font-family:'Liberation Sans',sans-serif;">Oper...</div>
<div class="a tabact" style="left:670px;top:115px;width:87px;height:27px"></div>
<svg class="a" style="left:675px;top:120px;" width="14" height="18" viewBox="0 0 14 18"><path d="M5.1 1.2 H8.5 L10.4 2.4 L11.7 3.5 L11.6 7.1 L12.6 8.4 L12.7 9.8 L11.6 10.9 L11.6 13.6 L9.1 13.6 L7.4 16.6 L5.5 16.6 L2.3 14.1 L2.3 9.8 L1.1 8.6 L1.1 4.3 L2.6 3.1 L3.6 2.2Z" fill="#fafcfd" stroke="#8fbcd0" stroke-width="0.9"/><path d="M3.2 4.3 H5.6 L7.3 7.2 L9 4.3 H11.1 V11.7 H9 V8.4 L7.3 10.6 L5.4 8.4 V11.7 H3.2Z" fill="#3a3a3a"/><path d="M3.6 4.8 H5.2 L7.2 8 L6 9 L5 7.5 V6Z" fill="#777" opacity=".6"/></svg>
<div class="a t" style="left:694px;top:121.5px;height:15px;line-height:15px;font-size:12px;color:#000;font-weight:normal;font-family:'Liberation Sans',sans-serif;">Gem...</div>
<svg class="a" style="left:737px;top:124px;" width="12" height="12" viewBox="0 0 12 12"><path d="M1.5 0.5 H4 L6 2.8 L8 0.5 H10.5 V3 L8.3 5.5 L10.5 8 V10.5 H8 L6 8.2 L4 10.5 H1.5 V8 L3.7 5.5 L1.5 3Z" fill="#fff" stroke="#5e5e5e" stroke-width="1.1"/></svg>
<svg class="a" style="left:770px;top:123px;" width="34" height="12" viewBox="0 0 34 12"><rect x="0.5" y="0.5" width="10" height="4" fill="#fff" stroke="#555" stroke-width="1"/><rect x="23.5" y="0.5" width="10" height="10" fill="#fff" stroke="#555" stroke-width="1"/><line x1="23" y1="2.5" x2="34" y2="2.5" stroke="#555" stroke-width="1"/></svg>
<svg class="a" style="left:722px;top:148px;" width="13" height="13" viewBox="0 0 13 13"><rect x="0.5" y="0.5" width="12" height="12" rx="1.5" fill="#e8282a" stroke="#a81818"/></svg>
<svg class="a" style="left:745px;top:145px;" width="16" height="16" viewBox="0 0 16 16"><path d="M2 2 L14 14 M14 2 L2 14" stroke="#bcbcbc" stroke-width="3.5"/><path d="M5 5 L14 14 M14 5 L5 14" stroke="#999" stroke-width="3.5"/></svg>
<div class="a" style="left:766px;top:145px;width:1px;height:18px;background:#888"></div>
<svg class="a" style="left:777px;top:146px;" width="14" height="16" viewBox="0 0 14 16"><path d="M7 0.5 L13.5 2.5 V8 Q13.5 13 7 15.5 Q0.5 13 0.5 8 V2.5Z" fill="#6ab45a"/><circle cx="7" cy="6" r="2.2" fill="#fff"/><path d="M3.5 11 Q7 7 10.5 11Z" fill="#fff"/></svg>
<svg class="a" style="left:799px;top:152px;" width="8" height="5" viewBox="0 0 8 5"><path d="M0 0 L8 0 L4 4.5 Z" fill="#222"/></svg>
<div class="a" style="left:476px;top:165px;width:339px;height:17px;background:linear-gradient(180deg,#fbfbfb,#ececec);border:1px solid #d4d4d4;border-radius:3px"></div>
<svg class="a" style="left:498px;top:165px;" width="16" height="16" viewBox="0 0 16 16"><circle cx="5.5" cy="10.5" r="3.5" fill="none" stroke="#3a5ad8" stroke-width="2.6" stroke-dasharray="1.6 1.1"/><circle cx="5.5" cy="10.5" r="2.6" fill="none" stroke="#3a5ad8" stroke-width="1.6"/><circle cx="12" cy="4" r="2.6" fill="none" stroke="#3a5ad8" stroke-width="2" stroke-dasharray="1.3 1"/><circle cx="12" cy="4" r="1.9" fill="none" stroke="#3a5ad8" stroke-width="1.2"/></svg>
<svg class="a" style="left:498px;top:183px;" width="16" height="16" viewBox="0 0 16 16"><circle cx="5.5" cy="10.5" r="3.5" fill="none" stroke="#e04818" stroke-width="2.6" stroke-dasharray="1.6 1.1"/><circle cx="5.5" cy="10.5" r="2.6" fill="none" stroke="#e04818" stroke-width="1.6"/><circle cx="12" cy="4" r="2.6" fill="none" stroke="#e04818" stroke-width="2" stroke-dasharray="1.3 1"/><circle cx="12" cy="4" r="1.9" fill="none" stroke="#e04818" stroke-width="1.2"/></svg>
<svg class="a" style="left:524px;top:166px;" width="14" height="16" viewBox="0 0 14 16"><path d="M7 0.5 L13.5 2.5 V8 Q13.5 13 7 15.5 Q0.5 13 0.5 8 V2.5Z" fill="#6ab45a"/><circle cx="7" cy="6" r="2.2" fill="#fff"/><path d="M3.5 11 Q7 7 10.5 11Z" fill="#fff"/></svg>
<svg class="a" style="left:524px;top:184px;" width="14" height="16" viewBox="0 0 14 16"><path d="M7 0.5 L13.5 2.5 V8 Q13.5 13 7 15.5 Q0.5 13 0.5 8 V2.5Z" fill="#6ab45a"/><circle cx="7" cy="6" r="2.2" fill="#fff"/><path d="M3.5 11 Q7 7 10.5 11Z" fill="#fff"/></svg>
<div class="a t" style="left:542px;top:167.5px;height:15px;line-height:15px;font-size:11.67px;color:#000;font-weight:normal;font-family:'Liberation Mono',monospace;">single_traffic_light.tfsm 11</div>
<div class="a t" style="left:542px;top:185.5px;height:15px;line-height:15px;font-size:11.67px;color:#000;font-weight:normal;font-family:'Liberation Mono',monospace;">single_traffic_light.tfsm 12</div>
<div class="a tabact" style="left:822px;top:115px;width:130px;height:27px"></div>
<svg class="a" style="left:828px;top:120px;" width="14" height="18" viewBox="0 0 14 18"><path d="M5.1 1.2 H8.5 L10.4 2.4 L11.7 3.5 L11.6 7.1 L12.6 8.4 L12.7 9.8 L11.6 10.9 L11.6 13.6 L9.1 13.6 L7.4 16.6 L5.5 16.6 L2.3 14.1 L2.3 9.8 L1.1 8.6 L1.1 4.3 L2.6 3.1 L3.6 2.2Z" fill="#fafcfd" stroke="#8fbcd0" stroke-width="0.9"/><path d="M3.2 4.3 H5.6 L7.3 7.2 L9 4.3 H11.1 V11.7 H9 V8.4 L7.3 10.6 L5.4 8.4 V11.7 H3.2Z" fill="#3a3a3a"/><path d="M3.6 4.8 H5.2 L7.2 8 L6 9 L5 7.5 V6Z" fill="#777" opacity=".6"/></svg>
<div class="a t" style="left:847px;top:121.5px;height:15px;line-height:15px;font-size:12px;color:#000;font-weight:normal;font-family:'Liberation Sans',sans-serif;">Event Manager</div>
<svg class="a" style="left:933px;top:124px;" width="12" height="12" viewBox="0 0 12 12"><path d="M1.5 0.5 H4 L6 2.8 L8 0.5 H10.5 V3 L8.3 5.5 L10.5 8 V10.5 H8 L6 8.2 L4 10.5 H1.5 V8 L3.7 5.5 L1.5 3Z" fill="#fff" stroke="#5e5e5e" stroke-width="1.1"/></svg>
<svg class="a" style="left:1021px;top:123px;" width="34" height="12" viewBox="0 0 34 12"><rect x="0.5" y="0.5" width="10" height="4" fill="#fff" stroke="#555" stroke-width="1"/><rect x="23.5" y="0.5" width="10" height="10" fill="#fff" stroke="#555" stroke-width="1"/><line x1="23" y1="2.5" x2="34" y2="2.5" stroke="#555" stroke-width="1"/></svg>
<svg class="a" style="left:995px;top:147px;" width="16" height="14" viewBox="0 0 16 14"><rect x="0.5" y="0.5" width="15" height="13" rx="1" fill="#eef4fc" stroke="#8ab4e8"/><path d="M5 3 L11.5 7 L5 11Z" fill="#5a98e0"/></svg>
<svg class="a" style="left:1019px;top:147px;" width="14" height="14" viewBox="0 0 14 14"><circle cx="7" cy="7" r="6" fill="#e01818"/><circle cx="6" cy="5" r="3" fill="#f87070" opacity=".5"/></svg>
<svg class="a" style="left:1043px;top:147px;" width="12" height="13" viewBox="0 0 12 13"><rect x="0.5" y="0.5" width="11" height="12" rx="1.5" fill="#8a8a8a" stroke="#aaa"/><rect x="2" y="1.5" width="8" height="1.5" fill="#ddd"/><rect x="2" y="10" width="8" height="1.5" fill="#ddd"/></svg>
<div class="a" style="left:830px;top:170px;width:231px;height:37px;border:1px solid #a8a8b0;background:#fff"></div>
<div class="a t" style="left:837px;top:182.5px;height:15px;line-height:15px;font-size:12px;color:#000;font-weight:normal;font-family:'Liberation Sans',sans-serif;">Select an event filter:</div>
<div class="a" style="left:954px;top:178px;width:101px;height:22px;border:1px solid #707070;border-radius:3px;background:linear-gradient(180deg,#f2f2f2 0,#ebebeb 50%,#dddddd 51%,#cfcfcf 100%)"></div>
<svg class="a" style="left:1042px;top:187px;" width="8" height="5" viewBox="0 0 8 5"><path d="M0 0 L8 0 L4 4.5 Z" fill="#111"/></svg>
<div class="a" style="left:830px;top:212px;width:231px;height:252px;border:1px solid #8a8e98;background:#fff"></div>
<div class="a" style="left:831px;top:213px;width:196px;height:23px;background:linear-gradient(180deg,#ffffff,#f2f3f7);border-bottom:1px solid #e3e6ee"></div>
<div class="a" style="left:1026px;top:213px;width:1px;height:250px;background:#e4e8f0"></div>
<div class="a" style="left:1027px;top:213px;width:16px;height:23px;background:linear-gradient(180deg,#ffffff,#f2f3f7);border-bottom:1px solid #e3e6ee"></div>
<div class="a t" style="left:838px;top:218.5px;height:15px;line-height:15px;font-size:12px;color:#000;font-weight:normal;font-family:'Liberation Sans',sans-serif;">Clock</div>
<div class="a" style="left:1043px;top:213px;width:16px;height:250px;background:linear-gradient(90deg,#ebebeb,#f3f3f3 50%,#ececec)"></div>
<svg class="a" style="left:1043px;top:218px;" width="16" height="6" viewBox="0 0 16 6"><path d="M3.5 5 L8 0.5 L12.5 5Z" fill="#555"/></svg>
<svg class="a" style="left:1043px;top:452px;" width="16" height="6" viewBox="0 0 16 6"><path d="M3.5 0.5 L12.5 0.5 L8 5Z" fill="#555"/></svg>
<div class="a" style="left:1044px;top:232px;width:14px;height:180px;border:1px solid #9a9a9a;border-radius:2px;background:linear-gradient(90deg,#f4f4f4,#e6e6e6 50%,#cfcfcf)"></div>
<svg class="a" style="left:1047px;top:318px;" width="8" height="8" viewBox="0 0 8 8"><path d="M0 1.5 H8 M0 4 H8 M0 6.5 H8" stroke="#555" stroke-width="1"/></svg>
<div class="a" style="left:831px;top:237px;width:212px;height:226px;overflow:hidden">
<div class="a" style="left:0;top:19.5px;width:212px;height:1px;background:#eef0f5"></div>
<svg class="a" style="left:7px;top:4.5px" width="12" height="11" viewBox="0 0 12 11"><path d="M0 0.5 L12 0.5 L6 10.5Z" fill="#8fd878"/><path d="M3 1 L9 1 L6 7Z" fill="#b4ec9c"/></svg>
<div class="a t" style="left:23px;top:2.5px;height:16px;line-height:16px;font-size:12px;letter-spacing:-0.35px">MSE_Semaphore_start</div>
<div class="a" style="left:0;top:38.5px;width:212px;height:1px;background:#eef0f5"></div>
<svg class="a" style="left:7px;top:23.5px" width="12" height="11" viewBox="0 0 12 11"><path d="M0 0.5 L12 0.5 L6 10.5Z" fill="#8fd878"/><path d="M3 1 L9 1 L6 7Z" fill="#b4ec9c"/></svg>
<div class="a t" style="left:23px;top:21.5px;height:16px;line-height:16px;font-size:12px;letter-spacing:-0.35px">MSE_Red_to_Green_fire</div>
<div class="a" style="left:0;top:57.5px;width:212px;height:1px;background:#eef0f5"></div>
<svg class="a" style="left:7px;top:42.5px" width="12" height="11" viewBox="0 0 12 11"><path d="M0 0.5 L12 0.5 L6 10.5Z" fill="#8fd878"/><path d="M3 1 L9 1 L6 7Z" fill="#b4ec9c"/></svg>
<div class="a t" style="left:23px;top:40.5px;height:16px;line-height:16px;font-size:12px;letter-spacing:-0.35px">MSE_Green_leaving</div>
<div class="a" style="left:0;top:76.5px;width:212px;height:1px;background:#eef0f5"></div>
<svg class="a" style="left:7px;top:61.5px" width="12" height="11" viewBox="0 0 12 11"><path d="M0 0.5 L12 0.5 L6 10.5Z" fill="#8fd878"/><path d="M3 1 L9 1 L6 7Z" fill="#b4ec9c"/></svg>
<div class="a t" style="left:23px;top:59.5px;height:16px;line-height:16px;font-size:12px;letter-spacing:-0.35px">MSE_Red_entering</div>
<div class="a" style="left:0;top:95.5px;width:212px;height:1px;background:#eef0f5"></div>
<svg class="a" style="left:7px;top:80.5px" width="12" height="11" viewBox="0 0 12 11"><path d="M0 0.5 L12 0.5 L6 10.5Z" fill="#8fd878"/><path d="M3 1 L9 1 L6 7Z" fill="#b4ec9c"/></svg>
<div class="a t" style="left:23px;top:78.5px;height:16px;line-height:16px;font-size:12px;letter-spacing:-0.35px">MSE_Semaphore_stall</div>
<div class="a" style="left:0;top:114.5px;width:212px;height:1px;background:#eef0f5"></div>
<svg class="a" style="left:7px;top:99.5px" width="12" height="11" viewBox="0 0 12 11"><path d="M0 0.5 L12 0.5 L6 10.5Z" fill="#8fd878"/><path d="M3 1 L9 1 L6 7Z" fill="#b4ec9c"/></svg>
<div class="a t" style="left:23px;top:97.5px;height:16px;line-height:16px;font-size:12px;letter-spacing:-0.35px">MSE_Green_to_Red_fire</div>
<div class="a" style="left:0;top:133.5px;width:212px;height:1px;background:#eef0f5"></div>
<svg class="a" style="left:7px;top:118.5px" width="12" height="11" viewBox="0 0 12 11"><path d="M0 0.5 L12 0.5 L6 10.5Z" fill="#8fd878"/><path d="M3 1 L9 1 L6 7Z" fill="#b4ec9c"/></svg>
<div class="a t" style="left:23px;top:116.5px;height:16px;line-height:16px;font-size:12px;letter-spacing:-0.35px">MSE_Green_entering</div>
<div class="a" style="left:0;top:152.5px;width:212px;height:1px;background:#eef0f5"></div>
<svg class="a" style="left:7px;top:137.5px" width="12" height="11" viewBox="0 0 12 11"><path d="M0 0.5 L12 0.5 L6 10.5Z" fill="#8fd878"/><path d="M3 1 L9 1 L6 7Z" fill="#b4ec9c"/></svg>
<div class="a t" style="left:23px;top:135.5px;height:16px;line-height:16px;font-size:12px;letter-spacing:-0.35px">MSE_initSemaphore_to_Red_fire</div>
<div class="a" style="left:0;top:171.5px;width:212px;height:1px;background:#eef0f5"></div>
<svg class="a" style="left:7px;top:156.5px" width="12" height="11" viewBox="0 0 12 11"><path d="M0 0.5 L12 0.5 L6 10.5Z" fill="#8fd878"/><path d="M3 1 L9 1 L6 7Z" fill="#b4ec9c"/></svg>
<div class="a t" style="left:23px;top:154.5px;height:16px;line-height:16px;font-size:12px;letter-spacing:-0.35px">MSE_minutes_ticks</div>
<div class="a" style="left:0;top:190.5px;width:212px;height:1px;background:#eef0f5"></div>
<svg class="a" style="left:7px;top:175.5px" width="12" height="11" viewBox="0 0 12 11"><path d="M0 0.5 L12 0.5 L6 10.5Z" fill="#8fd878"/><path d="M3 1 L9 1 L6 7Z" fill="#b4ec9c"/></svg>
<div class="a t" style="left:23px;top:173.5px;height:16px;line-height:16px;font-size:12px;letter-spacing:-0.35px">MSE_Red_leaving</div>
<div class="a" style="left:0;top:209.5px;width:212px;height:1px;background:#eef0f5"></div>
<svg class="a" style="left:7px;top:194.5px" width="12" height="11" viewBox="0 0 12 11"><path d="M0 0.5 L12 0.5 L6 10.5Z" fill="#8fd878"/><path d="M3 1 L9 1 L6 7Z" fill="#b4ec9c"/></svg>
<div class="a t" style="left:23px;top:192.5px;height:16px;line-height:16px;font-size:12px;letter-spacing:-0.35px">MSE_switch_occurs</div>
<div class="a" style="left:0;top:228.5px;width:212px;height:1px;background:#eef0f5"></div>
<svg class="a" style="left:7px;top:213.5px" width="12" height="11" viewBox="0 0 12 11"><path d="M0 0.5 L12 0.5 L6 10.5Z" fill="#8fd878"/><path d="M3 1 L9 1 L6 7Z" fill="#b4ec9c"/></svg>
<div class="a t" style="left:23px;top:211.5px;height:16px;line-height:16px;font-size:12px;letter-spacing:-0.35px">MSE_initSemaphore_entering</div>
</div>
<div class="a" style="left:830px;top:469px;width:231px;height:50px;border:1px solid #a8a8b0;background:#fff"></div>
<svg class="a" style="left:837px;top:486px;" width="17" height="16" viewBox="0 0 17 16"><circle cx="6" cy="10" r="3.8" fill="none" stroke="#111" stroke-width="3" stroke-dasharray="1.8 1.2"/><circle cx="6" cy="10" r="3" fill="none" stroke="#111" stroke-width="2.4"/><circle cx="13" cy="3.5" r="2.5" fill="none" stroke="#111" stroke-width="2" stroke-dasharray="1.3 1"/><circle cx="13" cy="3.5" r="2" fill="none" stroke="#111" stroke-width="1.2"/></svg>
<div class="a" style="left:956px;top:482px;width:26px;height:24px;border:1px solid #8a8a8a;border-radius:3px;background:linear-gradient(180deg,#f4f4f4,#dedede)"></div>
<svg class="a" style="left:962px;top:488px;" width="14" height="12" viewBox="0 0 14 12"><path d="M0.5 1 L7 3.5 L13.5 1 L7 11Z" fill="#8fd878"/></svg>
<div class="a" style="left:989px;top:482px;width:26px;height:24px;border:1px solid #8a8a8a;border-radius:3px;background:linear-gradient(180deg,#f4f4f4,#dedede)"></div>
<svg class="a" style="left:995px;top:488px;" width="14" height="12" viewBox="0 0 14 12"><path d="M0.5 1 L7 3.5 L13.5 1 L7 11Z" fill="#f0941a"/></svg>
<div class="a" style="left:1022px;top:482px;width:26px;height:24px;border:1px solid #8a8a8a;border-radius:3px;background:linear-gradient(180deg,#f4f4f4,#dedede)"></div>
<svg class="a" style="left:1028px;top:487px;" width="14" height="12" viewBox="0 0 14 12"><path d="M7 1 L13.5 11 L7 8.5 L0.5 11Z" fill="#f0941a"/></svg>
<div class="a tabact" style="left:1073px;top:115px;width:120px;height:27px"></div>
<svg class="a" style="left:1079px;top:120px;" width="14" height="18" viewBox="0 0 14 18"><path d="M5.1 1.2 H8.5 L10.4 2.4 L11.7 3.5 L11.6 7.1 L12.6 8.4 L12.7 9.8 L11.6 10.9 L11.6 13.6 L9.1 13.6 L7.4 16.6 L5.5 16.6 L2.3 14.1 L2.3 9.8 L1.1 8.6 L1.1 4.3 L2.6 3.1 L3.6 2.2Z" fill="#fafcfd" stroke="#8fbcd0" stroke-width="0.9"/><path d="M3.2 4.3 H5.6 L7.3 7.2 L9 4.3 H11.1 V11.7 H9 V8.4 L7.3 10.6 L5.4 8.4 V11.7 H3.2Z" fill="#3a3a3a"/><path d="M3.6 4.8 H5.2 L7.2 8 L6 9 L5 7.5 V6Z" fill="#777" opacity=".6"/></svg>
<div class="a t" style="left:1098px;top:121.5px;height:15px;line-height:15px;font-size:12px;color:#000;font-weight:normal;font-family:'Liberation Sans',sans-serif;">Logical Steps</div>
<svg class="a" style="left:1173.5px;top:124px;" width="12" height="12" viewBox="0 0 12 12"><path d="M1.5 0.5 H4 L6 2.8 L8 0.5 H10.5 V3 L8.3 5.5 L10.5 8 V10.5 H8 L6 8.2 L4 10.5 H1.5 V8 L3.7 5.5 L1.5 3Z" fill="#fff" stroke="#5e5e5e" stroke-width="1.1"/></svg>
<svg class="a" style="left:1272px;top:123px;" width="34" height="12" viewBox="0 0 34 12"><rect x="0.5" y="0.5" width="10" height="4" fill="#fff" stroke="#555" stroke-width="1"/><rect x="23.5" y="0.5" width="10" height="10" fill="#fff" stroke="#555" stroke-width="1"/><line x1="23" y1="2.5" x2="34" y2="2.5" stroke="#555" stroke-width="1"/></svg>
<div class="a" style="left:1302px;top:143px;width:16px;height:363px;background:linear-gradient(90deg,#ebebeb,#f3f3f3 50%,#ececec)"></div>
<svg class="a" style="left:1302px;top:148px;" width="16" height="6" viewBox="0 0 16 6"><path d="M3.5 5 L8 0.5 L12.5 5Z" fill="#555"/></svg>
<svg class="a" style="left:1302px;top:495px;" width="16" height="6" viewBox="0 0 16 6"><path d="M3.5 0.5 L12.5 0.5 L8 5Z" fill="#555"/></svg>
<div class="a" style="left:1303px;top:161px;width:14px;height:297px;border:1px solid #9a9a9a;border-radius:2px;background:linear-gradient(90deg,#f4f4f4,#e6e6e6 50%,#cfcfcf)"></div>
<svg class="a" style="left:1306px;top:305px;" width="8" height="8" viewBox="0 0 8 8"><path d="M0 1.5 H8 M0 4 H8 M0 6.5 H8" stroke="#555" stroke-width="1"/></svg>
<div class="a" style="left:1075px;top:507px;width:227px;height:16px;background:linear-gradient(180deg,#ebebeb,#f3f3f3 50%,#ececec)"></div>
<svg class="a" style="left:1080px;top:507px;" width="6" height="16" viewBox="0 0 6 16"><path d="M5 3.5 L0.5 8 L5 12.5Z" fill="#333"/></svg>
<svg class="a" style="left:1291px;top:507px;" width="6" height="16" viewBox="0 0 6 16"><path d="M0.5 3.5 L5 8 L0.5 12.5Z" fill="#333"/></svg>
<div class="a" style="left:1094px;top:508px;width:91px;height:14px;border:1px solid #9a9a9a;border-radius:2px;background:linear-gradient(180deg,#f4f4f4,#e6e6e6 50%,#cfcfcf)"></div>
<svg class="a" style="left:1135px;top:511px;" width="8" height="8" viewBox="0 0 8 8"><path d="M1.5 0 V8 M4 0 V8 M6.5 0 V8" stroke="#555" stroke-width="1"/></svg>
<div class="a" style="left:1302px;top:507px;width:16px;height:16px;background:#efefef"></div>
<div class="a" style="left:1075px;top:143px;width:227px;height:363px;overflow:hidden">
<svg class="a" style="left:10px;top:6px" width="7" height="7" viewBox="0 0 7 7"><path d="M6.5 0 V6.5 H0Z" fill="#333"/></svg>
<svg class="a" style="left:23px;top:1px" width="16" height="15" viewBox="0 0 16 15"><path d="M8 7.5 Q11 7.5 13 11.5 Q13.5 14.5 10.5 14 Q8 13.3 5.5 14 Q2.5 14.5 3 11.5 Q5 7.5 8 7.5Z" fill="#000"/><ellipse cx="2" cy="6.5" rx="1.7" ry="2.2" fill="#000" transform="rotate(-25 2 6.5)"/><ellipse cx="5.7" cy="2.5" rx="1.8" ry="2.4" fill="#000"/><ellipse cx="10.3" cy="2.5" rx="1.8" ry="2.4" fill="#000"/><ellipse cx="14" cy="6.5" rx="1.7" ry="2.2" fill="#000" transform="rotate(25 14 6.5)"/></svg>
<div class="a t" style="left:44px;top:1.5999999999999996px;height:16px;line-height:16px;font-size:11.6px;font-family:Liberation Mono">LogicalStep [646594173]</div>
<svg class="a" style="left:42px;top:22px" width="16" height="10" viewBox="0 0 16 10"><path d="M0.5 5.5 Q8 -2.5 15.5 5.5 Q8 12.5 0.5 5.5Z" fill="#a8d890"/><path d="M2.6 6 Q8 1.8 13.4 6 Q8 9.6 2.6 6Z" fill="#fff"/><circle cx="8" cy="5.2" r="2.7" fill="#a8d890"/></svg>
<div class="a t" style="left:63px;top:19.6px;height:16px;line-height:16px;font-size:11.6px;font-family:Liberation Mono">MSE_Semaphore_stall</div>
<svg class="a" style="left:10px;top:42px" width="7" height="7" viewBox="0 0 7 7"><path d="M6.5 0 V6.5 H0Z" fill="#333"/></svg>
<svg class="a" style="left:23px;top:37px" width="16" height="15" viewBox="0 0 16 15"><path d="M8 7.5 Q11 7.5 13 11.5 Q13.5 14.5 10.5 14 Q8 13.3 5.5 14 Q2.5 14.5 3 11.5 Q5 7.5 8 7.5Z" fill="#000"/><ellipse cx="2" cy="6.5" rx="1.7" ry="2.2" fill="#000" transform="rotate(-25 2 6.5)"/><ellipse cx="5.7" cy="2.5" rx="1.8" ry="2.4" fill="#000"/><ellipse cx="10.3" cy="2.5" rx="1.8" ry="2.4" fill="#000"/><ellipse cx="14" cy="6.5" rx="1.7" ry="2.2" fill="#000" transform="rotate(25 14 6.5)"/></svg>
<div class="a t" style="left:44px;top:37.6px;height:16px;line-height:16px;font-size:11.6px;font-family:Liberation Mono">LogicalStep [986361840]</div>
<svg class="a" style="left:42px;top:58px" width="16" height="10" viewBox="0 0 16 10"><path d="M0.5 5.5 Q8 -2.5 15.5 5.5 Q8 12.5 0.5 5.5Z" fill="#a8d890"/><path d="M2.6 6 Q8 1.8 13.4 6 Q8 9.6 2.6 6Z" fill="#fff"/><circle cx="8" cy="5.2" r="2.7" fill="#a8d890"/></svg>
<div class="a t" style="left:63px;top:55.6px;height:16px;line-height:16px;font-size:11.6px;font-family:Liberation Mono">MSE_minutes_ticks</div>
<svg class="a" style="left:42px;top:76px" width="16" height="10" viewBox="0 0 16 10"><path d="M0.5 5.5 Q8 -2.5 15.5 5.5 Q8 12.5 0.5 5.5Z" fill="#a8d890"/><path d="M2.6 6 Q8 1.8 13.4 6 Q8 9.6 2.6 6Z" fill="#fff"/><circle cx="8" cy="5.2" r="2.7" fill="#a8d890"/></svg>
<div class="a t" style="left:63px;top:73.6px;height:16px;line-height:16px;font-size:11.6px;font-family:Liberation Mono">MSE_Green_to_Red_fire</div>
<svg class="a" style="left:42px;top:94px" width="16" height="10" viewBox="0 0 16 10"><path d="M0.5 5.5 Q8 -2.5 15.5 5.5 Q8 12.5 0.5 5.5Z" fill="#a8d890"/><path d="M2.6 6 Q8 1.8 13.4 6 Q8 9.6 2.6 6Z" fill="#fff"/><circle cx="8" cy="5.2" r="2.7" fill="#a8d890"/></svg>
<div class="a t" style="left:63px;top:91.6px;height:16px;line-height:16px;font-size:11.6px;font-family:Liberation Mono">MSE_Green_leaving</div>
<svg class="a" style="left:10px;top:114px" width="7" height="7" viewBox="0 0 7 7"><path d="M6.5 0 V6.5 H0Z" fill="#333"/></svg>
<svg class="a" style="left:23px;top:109px" width="16" height="15" viewBox="0 0 16 15"><path d="M8 7.5 Q11 7.5 13 11.5 Q13.5 14.5 10.5 14 Q8 13.3 5.5 14 Q2.5 14.5 3 11.5 Q5 7.5 8 7.5Z" fill="#000"/><ellipse cx="2" cy="6.5" rx="1.7" ry="2.2" fill="#000" transform="rotate(-25 2 6.5)"/><ellipse cx="5.7" cy="2.5" rx="1.8" ry="2.4" fill="#000"/><ellipse cx="10.3" cy="2.5" rx="1.8" ry="2.4" fill="#000"/><ellipse cx="14" cy="6.5" rx="1.7" ry="2.2" fill="#000" transform="rotate(25 14 6.5)"/></svg>
<div class="a t" style="left:44px;top:109.6px;height:16px;line-height:16px;font-size:11.6px;font-family:Liberation Mono">LogicalStep [508144171]</div>
<svg class="a" style="left:42px;top:130px" width="16" height="10" viewBox="0 0 16 10"><path d="M0.5 5.5 Q8 -2.5 15.5 5.5 Q8 12.5 0.5 5.5Z" fill="#a8d890"/><path d="M2.6 6 Q8 1.8 13.4 6 Q8 9.6 2.6 6Z" fill="#fff"/><circle cx="8" cy="5.2" r="2.7" fill="#a8d890"/></svg>
<div class="a t" style="left:63px;top:127.6px;height:16px;line-height:16px;font-size:11.6px;font-family:Liberation Mono">MSE_minutes_ticks</div>
<svg class="a" style="left:42px;top:148px" width="16" height="10" viewBox="0 0 16 10"><path d="M0.5 5.5 Q8 -2.5 15.5 5.5 Q8 12.5 0.5 5.5Z" fill="#a8d890"/><path d="M2.6 6 Q8 1.8 13.4 6 Q8 9.6 2.6 6Z" fill="#fff"/><circle cx="8" cy="5.2" r="2.7" fill="#a8d890"/></svg>
<div class="a t" style="left:63px;top:145.6px;height:16px;line-height:16px;font-size:11.6px;font-family:Liberation Mono">MSE_Semaphore_stall</div>
<svg class="a" style="left:42px;top:166px" width="16" height="10" viewBox="0 0 16 10"><path d="M0.5 5.5 Q8 -2.5 15.5 5.5 Q8 12.5 0.5 5.5Z" fill="#a8d890"/><path d="M2.6 6 Q8 1.8 13.4 6 Q8 9.6 2.6 6Z" fill="#fff"/><circle cx="8" cy="5.2" r="2.7" fill="#a8d890"/></svg>
<div class="a t" style="left:63px;top:163.6px;height:16px;line-height:16px;font-size:11.6px;font-family:Liberation Mono">MSE_Green_to_Red_fire</div>
<svg class="a" style="left:42px;top:184px" width="16" height="10" viewBox="0 0 16 10"><path d="M0.5 5.5 Q8 -2.5 15.5 5.5 Q8 12.5 0.5 5.5Z" fill="#a8d890"/><path d="M2.6 6 Q8 1.8 13.4 6 Q8 9.6 2.6 6Z" fill="#fff"/><circle cx="8" cy="5.2" r="2.7" fill="#a8d890"/></svg>
<div class="a t" style="left:63px;top:181.6px;height:16px;line-height:16px;font-size:11.6px;font-family:Liberation Mono">MSE_Green_leaving</div>
<svg class="a" style="left:10px;top:204px" width="7" height="7" viewBox="0 0 7 7"><path d="M6.5 0 V6.5 H0Z" fill="#333"/></svg>
<svg class="a" style="left:23px;top:199px" width="16" height="15" viewBox="0 0 16 15"><path d="M8 7.5 Q11 7.5 13 11.5 Q13.5 14.5 10.5 14 Q8 13.3 5.5 14 Q2.5 14.5 3 11.5 Q5 7.5 8 7.5Z" fill="#000"/><ellipse cx="2" cy="6.5" rx="1.7" ry="2.2" fill="#000" transform="rotate(-25 2 6.5)"/><ellipse cx="5.7" cy="2.5" rx="1.8" ry="2.4" fill="#000"/><ellipse cx="10.3" cy="2.5" rx="1.8" ry="2.4" fill="#000"/><ellipse cx="14" cy="6.5" rx="1.7" ry="2.2" fill="#000" transform="rotate(25 14 6.5)"/></svg>
<div class="a t" style="left:44px;top:199.6px;height:16px;line-height:16px;font-size:11.6px;font-family:Liberation Mono">LogicalStep [287866062]</div>
<svg class="a" style="left:42px;top:220px" width="16" height="10" viewBox="0 0 16 10"><path d="M0.5 5.5 Q8 -2.5 15.5 5.5 Q8 12.5 0.5 5.5Z" fill="#a8d890"/><path d="M2.6 6 Q8 1.8 13.4 6 Q8 9.6 2.6 6Z" fill="#fff"/><circle cx="8" cy="5.2" r="2.7" fill="#a8d890"/></svg>
<div class="a t" style="left:63px;top:217.6px;height:16px;line-height:16px;font-size:11.6px;font-family:Liberation Mono">MSE_Red_entering</div>
<svg class="a" style="left:42px;top:238px" width="16" height="10" viewBox="0 0 16 10"><path d="M0.5 5.5 Q8 -2.5 15.5 5.5 Q8 12.5 0.5 5.5Z" fill="#a8d890"/><path d="M2.6 6 Q8 1.8 13.4 6 Q8 9.6 2.6 6Z" fill="#fff"/><circle cx="8" cy="5.2" r="2.7" fill="#a8d890"/></svg>
<div class="a t" style="left:63px;top:235.6px;height:16px;line-height:16px;font-size:11.6px;font-family:Liberation Mono">MSE_minutes_ticks</div>
<svg class="a" style="left:42px;top:256px" width="16" height="10" viewBox="0 0 16 10"><path d="M0.5 5.5 Q8 -2.5 15.5 5.5 Q8 12.5 0.5 5.5Z" fill="#a8d890"/><path d="M2.6 6 Q8 1.8 13.4 6 Q8 9.6 2.6 6Z" fill="#fff"/><circle cx="8" cy="5.2" r="2.7" fill="#a8d890"/></svg>
<div class="a t" style="left:63px;top:253.6px;height:16px;line-height:16px;font-size:11.6px;font-family:Liberation Mono">MSE_Green_to_Red_fire</div>
<svg class="a" style="left:42px;top:274px" width="16" height="10" viewBox="0 0 16 10"><path d="M0.5 5.5 Q8 -2.5 15.5 5.5 Q8 12.5 0.5 5.5Z" fill="#a8d890"/><path d="M2.6 6 Q8 1.8 13.4 6 Q8 9.6 2.6 6Z" fill="#fff"/><circle cx="8" cy="5.2" r="2.7" fill="#a8d890"/></svg>
<div class="a t" style="left:63px;top:271.6px;height:16px;line-height:16px;font-size:11.6px;font-family:Liberation Mono">MSE_Green_leaving</div>
<svg class="a" style="left:10px;top:294px" width="7" height="7" viewBox="0 0 7 7"><path d="M6.5 0 V6.5 H0Z" fill="#333"/></svg>
<svg class="a" style="left:23px;top:289px" width="16" height="15" viewBox="0 0 16 15"><path d="M8 7.5 Q11 7.5 13 11.5 Q13.5 14.5 10.5 14 Q8 13.3 5.5 14 Q2.5 14.5 3 11.5 Q5 7.5 8 7.5Z" fill="#000"/><ellipse cx="2" cy="6.5" rx="1.7" ry="2.2" fill="#000" transform="rotate(-25 2 6.5)"/><ellipse cx="5.7" cy="2.5" rx="1.8" ry="2.4" fill="#000"/><ellipse cx="10.3" cy="2.5" rx="1.8" ry="2.4" fill="#000"/><ellipse cx="14" cy="6.5" rx="1.7" ry="2.2" fill="#000" transform="rotate(25 14 6.5)"/></svg>
<div class="a t" style="left:44px;top:289.6px;height:16px;line-height:16px;font-size:11.6px;font-family:Liberation Mono">LogicalStep [1713815872]</div>
<svg class="a" style="left:42px;top:310px" width="16" height="10" viewBox="0 0 16 10"><path d="M0.5 5.5 Q8 -2.5 15.5 5.5 Q8 12.5 0.5 5.5Z" fill="#a8d890"/><path d="M2.6 6 Q8 1.8 13.4 6 Q8 9.6 2.6 6Z" fill="#fff"/><circle cx="8" cy="5.2" r="2.7" fill="#a8d890"/></svg>
<div class="a t" style="left:63px;top:307.6px;height:16px;line-height:16px;font-size:11.6px;font-family:Liberation Mono">MSE_Red_entering</div>
<svg class="a" style="left:42px;top:328px" width="16" height="10" viewBox="0 0 16 10"><path d="M0.5 5.5 Q8 -2.5 15.5 5.5 Q8 12.5 0.5 5.5Z" fill="#a8d890"/><path d="M2.6 6 Q8 1.8 13.4 6 Q8 9.6 2.6 6Z" fill="#fff"/><circle cx="8" cy="5.2" r="2.7" fill="#a8d890"/></svg>
<div class="a t" style="left:63px;top:325.6px;height:16px;line-height:16px;font-size:11.6px;font-family:Liberation Mono">MSE_minutes_ticks</div>
<svg class="a" style="left:42px;top:346px" width="16" height="10" viewBox="0 0 16 10"><path d="M0.5 5.5 Q8 -2.5 15.5 5.5 Q8 12.5 0.5 5.5Z" fill="#a8d890"/><path d="M2.6 6 Q8 1.8 13.4 6 Q8 9.6 2.6 6Z" fill="#fff"/><circle cx="8" cy="5.2" r="2.7" fill="#a8d890"/></svg>
<div class="a t" style="left:63px;top:343.6px;height:16px;line-height:16px;font-size:11.6px;font-family:Liberation Mono">MSE_Semaphore_stall</div>
</div>
<svg class="a" style="left:17px;top:539px;" width="15" height="13" viewBox="0 0 15 13"><path d="M0.5 10.5 H4.5 V2.5 H9.5 V10.5 H14" fill="none" stroke="#9a9a9a" stroke-width="1.6"/></svg>
<div class="a t" style="left:35px;top:537.5px;height:15px;line-height:15px;font-size:12px;color:#8a8a8a;font-weight:normal;font-family:'Liberation Sans',sans-serif;">vcdFromSimu.vcd</div>
<div class="a tabact" style="left:157px;top:531px;width:147px;height:27px"></div>
<svg class="a" style="left:161px;top:539px;" width="15" height="13" viewBox="0 0 15 13"><path d="M0.5 10.5 H4.5 V2.5 H9.5 V10.5 H14" fill="none" stroke="#333" stroke-width="1.6"/></svg>
<div class="a t" style="left:181px;top:537.5px;height:15px;line-height:15px;font-size:12px;color:#000;font-weight:normal;font-family:'Liberation Sans',sans-serif;">vcdFromSimu.vcd</div>
<svg class="a" style="left:285.5px;top:539px;" width="12" height="12" viewBox="0 0 12 12"><path d="M1.5 0.5 H4 L6 2.8 L8 0.5 H10.5 V3 L8.3 5.5 L10.5 8 V10.5 H8 L6 8.2 L4 10.5 H1.5 V8 L3.7 5.5 L1.5 3Z" fill="#fff" stroke="#5e5e5e" stroke-width="1.1"/></svg>
<svg class="a" style="left:941px;top:539px;" width="34" height="12" viewBox="0 0 34 12"><rect x="0.5" y="0.5" width="10" height="4" fill="#fff" stroke="#555" stroke-width="1"/><rect x="23.5" y="0.5" width="10" height="10" fill="#fff" stroke="#555" stroke-width="1"/><line x1="23" y1="2.5" x2="34" y2="2.5" stroke="#555" stroke-width="1"/></svg>
<div class="a" style="left:13px;top:559px;width:956px;height:187px;background:#000"></div>
<div class="a" style="left:13px;top:746px;width:956px;height:25px;background:#efefef"></div>
<div class="a" style="left:13px;top:771px;width:973px;height:1px;background:#a0a0a0"></div>
<div class="a" style="left:970px;top:559px;width:16px;height:212px;background:linear-gradient(90deg,#ebebeb,#f3f3f3 50%,#ececec)"></div>
<svg class="a" style="left:970px;top:564px;" width="16" height="6" viewBox="0 0 16 6"><path d="M3.5 5 L8 0.5 L12.5 5Z" fill="#555"/></svg>
<svg class="a" style="left:970px;top:760px;" width="16" height="6" viewBox="0 0 16 6"><path d="M3.5 0.5 L12.5 0.5 L8 5Z" fill="#555"/></svg>
<div class="a" style="left:971px;top:577px;width:14px;height:22px;border:1px solid #9a9a9a;border-radius:2px;background:linear-gradient(90deg,#f4f4f4,#e6e6e6 50%,#cfcfcf)"></div>
<svg class="a" style="left:974px;top:584px;" width="8" height="8" viewBox="0 0 8 8"><path d="M0 1.5 H8 M0 4 H8 M0 6.5 H8" stroke="#555" stroke-width="1"/></svg>
<div class="a" style="left:13px;top:771px;width:66px;height:24px;background:#fff;border-bottom:1px solid #a0a0a0;border-right:1px solid #a0a0a0;border-radius:0 0 5px 0"></div>
<div class="a t" style="left:17px;top:775.5px;height:15px;line-height:15px;font-size:12px;color:#000;font-weight:normal;font-family:'Liberation Sans',sans-serif;">Vcd Viewer</div>
<div class="a" style="left:78px;top:771px;width:105px;height:24px;background:#fff;border-right:1px solid #a0a0a0"></div>
<div class="a t" style="left:83px;top:775.5px;height:15px;line-height:15px;font-size:12px;color:#000;font-weight:normal;font-family:'Liberation Sans',sans-serif;">vcdFromSimu.vcd</div>
<div class="a" style="left:13px;top:559px;width:956px;height:187px;overflow:hidden"><svg style="position:absolute;left:-13px;top:-559px" width="1000" height="760" viewBox="0 0 1000 760"><text x="16" y="580" font-size="13" fill="#ff1010" font-family="Liberation Sans" >Simulation</text><rect x="83.5" y="568.5" width="35" height="12" fill="none" stroke="#3a3aff" stroke-width="1.2"/><path d="M168.5 589 V569.5 H368.5 V590" fill="none" stroke="#fff" stroke-width="1.3"/><path d="M188.5 569 V574" stroke="#fff" stroke-width="1.2"/><path d="M208.5 569 V574" stroke="#fff" stroke-width="1.2"/><path d="M228.5 569 V574" stroke="#fff" stroke-width="1.2"/><path d="M248.5 569 V574" stroke="#fff" stroke-width="1.2"/><path d="M288.5 569 V574" stroke="#fff" stroke-width="1.2"/><path d="M308.5 569 V574" stroke="#fff" stroke-width="1.2"/><path d="M328.5 569 V574" stroke="#fff" stroke-width="1.2"/><path d="M348.5 569 V574" stroke="#fff" stroke-width="1.2"/><path d="M268.5 569 V581" stroke="#fff" stroke-width="1.2"/><text x="170" y="587.5" font-size="11" fill="#ff1010" font-family="Liberation Sans">10</text><rect x="18.5" y="634.5" width="139" height="34" fill="none" stroke="#d8d8d8" stroke-width="1" stroke-dasharray="1 1.6"/><text x="22" y="655" font-size="13.2" font-weight="bold" fill="#fff" font-family="Liberation Sans">TrafficControl::mai...</text><path d="M168 659.5 H208.5 V639.5 H216.5 V659.5 H389" fill="none" stroke="#12e012" stroke-width="1.1"/><rect x="18.5" y="674.5" width="139" height="34" fill="none" stroke="#d8d8d8" stroke-width="1" stroke-dasharray="1 1.6"/><text x="22" y="695" font-size="13.2" font-weight="bold" fill="#fff" font-family="Liberation Sans">TrafficControl::mai...</text><path d="M168 699.5 H188.5 V680.5 H196.5 V699.5 H208.5 V680.5 H216.5 V699.5 H228.5 V680.5 H236.5 V699.5 H248.5 V680.5 H256.5 V699.5 H268.5 V680.5 H276.5 V699.5 H288.5 V680.5 H296.5 V699.5 H308.5 V680.5 H316.5 V699.5 H328.5 V680.5 H336.5 V699.5 H348.5 V680.5 H356.5 V699.5 H368.5 V680.5 H376.5 V699.5 H389" fill="none" stroke="#12e012" stroke-width="1.1"/><rect x="18.5" y="714.5" width="139" height="34" fill="none" stroke="#d8d8d8" stroke-width="1" stroke-dasharray="1 1.6"/><text x="22" y="735" font-size="13.2" font-weight="bold" fill="#fff" font-family="Liberation Sans">TrafficControl::mai...</text><path d="M168 739.5 H268.5 V720.0 H276.5 V739.5 H308.5 V720.0 H316.5 V739.5 H389" fill="none" stroke="#12e012" stroke-width="1.1"/></svg></div>
<div class="a tabact" style="left:993px;top:531px;width:90px;height:27px"></div>
<svg class="a" style="left:999px;top:538px;" width="14" height="14" viewBox="0 0 14 14"><rect x="0.5" y="0.5" width="4" height="4" fill="#cfe4f8" stroke="#2a6ab8"/><rect x="0.5" y="9.5" width="4" height="4" fill="#cfe4f8" stroke="#2a6ab8"/><path d="M6 2.5 H13 M8 7 H9 M11 7 H13 M6 11.5 H13" stroke="#2a6ab8" stroke-width="1"/><rect x="7" y="6" width="2" height="2" fill="none" stroke="#2a6ab8" stroke-width=".8"/></svg>
<div class="a t" style="left:1018px;top:537.5px;height:15px;line-height:15px;font-size:12px;color:#000;font-weight:normal;font-family:'Liberation Sans',sans-serif;">Outline</div>
<svg class="a" style="left:1064px;top:539px;" width="12" height="12" viewBox="0 0 12 12"><path d="M1.5 0.5 H4 L6 2.8 L8 0.5 H10.5 V3 L8.3 5.5 L10.5 8 V10.5 H8 L6 8.2 L4 10.5 H1.5 V8 L3.7 5.5 L1.5 3Z" fill="#fff" stroke="#5e5e5e" stroke-width="1.1"/></svg>
<svg class="a" style="left:1174px;top:537px;" width="15" height="15" viewBox="0 0 15 15"><circle cx="5" cy="5" r="4" fill="#c8c8c8"/><circle cx="10" cy="7" r="4" fill="#bbb"/><circle cx="6" cy="11" r="4" fill="#aaa"/></svg>
<svg class="a" style="left:1199px;top:537px;" width="12" height="15" viewBox="0 0 12 15"><path d="M2.5 1 V13 H6 M2.5 7 H6" fill="none" stroke="#1a2a6a" stroke-width="1.2"/><rect x="0.5" y="0.5" width="4" height="3" fill="#1a2a6a"/><rect x="6.5" y="5.5" width="4" height="3" fill="#fff" stroke="#1a2a6a"/><rect x="6.5" y="11.5" width="4" height="3" fill="#fff" stroke="#1a2a6a"/></svg>
<div class="a" style="left:1216px;top:535px;width:22px;height:19px;border:1px solid #555;border-radius:3px;background:linear-gradient(180deg,#e6e6e6,#cfcfcf)"></div>
<svg class="a" style="left:1219px;top:537px;" width="16" height="15" viewBox="0 0 16 15"><rect x="0.5" y="2.5" width="14" height="12" fill="#f0ecd8" stroke="#8a8a8a"/><path d="M0.5 6 H14 M0.5 9 H14 M0.5 12 H14 M5 2.5 V14.5" stroke="#9a9a9a" stroke-width=".8"/><rect x="9.5" y="0.5" width="6" height="6" fill="#f8e060" stroke="#8a7a30"/></svg>
<svg class="a" style="left:1251px;top:539px;" width="11" height="7" viewBox="0 0 11 7"><path d="M0.5 0.5 H10.5 L5.5 6Z" fill="#fff" stroke="#444"/></svg>
<svg class="a" style="left:1271px;top:539px;" width="34" height="12" viewBox="0 0 34 12"><rect x="0.5" y="0.5" width="10" height="4" fill="#fff" stroke="#555" stroke-width="1"/><rect x="23.5" y="0.5" width="10" height="10" fill="#fff" stroke="#555" stroke-width="1"/><line x1="23" y1="2.5" x2="34" y2="2.5" stroke="#555" stroke-width="1"/></svg>
<div class="a" style="left:996px;top:559px;width:179px;height:236px;background:#d3e6fb;border:1px solid #3d94ee"></div>
<div class="a" style="left:1184px;top:559px;width:132px;height:236px;background:#f5f5f5"></div>
<div class="a" style="left:997px;top:560px;width:177px;height:234px;overflow:hidden"><svg style="position:absolute;left:-997px;top:-560px;font-family:Liberation Sans" width="1328" height="900" viewBox="0 0 1328 900"><g transform="translate(991.00 445.83) scale(0.685)" ><circle cx="127" cy="209" r="9.5" fill="#0c1a30"/><text x="138" y="211.5" font-size="10.6" fill="#8a8a8a">initSemaphore</text><path d="M123 218 V300" stroke="#6a6a6a" stroke-width="1.5"/><path d="M118 292 L123 300 L128 292" fill="none" stroke="#6a6a6a" stroke-width="1.5"/><ellipse cx="127" cy="335.5" rx="36" ry="33" fill="none" stroke="#244a73" stroke-width="3"/><circle cx="127" cy="469.6" r="32.5" fill="none" stroke="#244a73" stroke-width="3"/><text x="127" y="340" font-size="10.6" fill="#3b5a82" text-anchor="middle">Red</text><text x="127" y="474" font-size="10.6" fill="#3b5a82" text-anchor="middle">Green</text><path d="M141.5 324 L163 334 L152.5 336 L151 345.5Z" fill="none" stroke="#6cbd5c" stroke-width="2" stroke-linejoin="miter"/><path d="M165 360.5 L184.5 384 L159 436" fill="none" stroke="#6a6a6a" stroke-width="1.5"/><path d="M158 426 L159 436 L166 429" fill="none" stroke="#6a6a6a" stroke-width="1.5"/><path d="M92 437 L67 390 L89.5 357" fill="none" stroke="#6a6a6a" stroke-width="1.5"/><path d="M81 360 L89.5 357 L89 366" fill="none" stroke="#6a6a6a" stroke-width="1.5"/><text x="133" y="252" font-size="10.6" fill="#161616" text-anchor="middle">after 1 on minutes</text><text x="133" y="265" font-size="10.6" fill="#161616" text-anchor="middle">/</text><text x="133" y="278" font-size="10.6" fill="#161616" text-anchor="middle">dosomething</text><text x="27" y="380" font-size="10.6" fill="#161616" text-anchor="start">after 4 on minutes</text><text x="73" y="393" font-size="10.6" fill="#161616" text-anchor="start">/</text><text x="57.5" y="406" font-size="10.6" fill="#161616" text-anchor="start">doRed</text><text x="57" y="419" font-size="10.6" fill="#161616" text-anchor="start">!switch;</text><text x="139" y="392" font-size="10.6" fill="#161616" text-anchor="start">after 3 on minutes</text><text x="184" y="405" font-size="10.6" fill="#161616" text-anchor="start">/</text><text x="164" y="418" font-size="10.6" fill="#161616" text-anchor="start">doGreen</text></g></svg></div>
<div class="a" style="left:10px;top:802px;width:652px;height:26px;background:#cfdcee;border-radius:6px 6px 0 0;border-bottom:1px solid #a9b6c8"></div>
<div class="a" style="left:10px;top:802px;width:103px;height:26px;background:#fff;border:1px solid #b8c2d2;border-bottom:none;border-radius:6px 6px 0 0"></div>
<svg class="a" style="left:16px;top:807px;" width="14" height="18" viewBox="0 0 14 18"><path d="M5.1 1.2 H8.5 L10.4 2.4 L11.7 3.5 L11.6 7.1 L12.6 8.4 L12.7 9.8 L11.6 10.9 L11.6 13.6 L9.1 13.6 L7.4 16.6 L5.5 16.6 L2.3 14.1 L2.3 9.8 L1.1 8.6 L1.1 4.3 L2.6 3.1 L3.6 2.2Z" fill="#fafcfd" stroke="#8fbcd0" stroke-width="0.9"/><path d="M3.2 4.3 H5.6 L7.3 7.2 L9 4.3 H11.1 V11.7 H9 V8.4 L7.3 10.6 L5.4 8.4 V11.7 H3.2Z" fill="#3a3a3a"/><path d="M3.6 4.8 H5.2 L7.2 8 L6 9 L5 7.5 V6Z" fill="#777" opacity=".6"/></svg>
<div class="a t" style="left:35px;top:808.5px;height:15px;line-height:15px;font-size:12px;color:#000;font-weight:normal;font-family:'Liberation Sans',sans-serif;">Time Line</div>
<svg class="a" style="left:94px;top:810px;" width="12" height="12" viewBox="0 0 12 12"><path d="M1.5 0.5 H4 L6 2.8 L8 0.5 H10.5 V3 L8.3 5.5 L10.5 8 V10.5 H8 L6 8.2 L4 10.5 H1.5 V8 L3.7 5.5 L1.5 3Z" fill="#fff" stroke="#5e5e5e" stroke-width="1.1"/></svg>
<div class="a" style="left:586px;top:805px;width:23px;height:21px;border:1px solid #4a5262;border-radius:3px;background:linear-gradient(180deg,#d8dee8,#c4ccd8)"></div>
<svg class="a" style="left:589px;top:808px;" width="17" height="15" viewBox="0 0 17 15"><rect x="0.5" y="0.5" width="16" height="14" rx="1" fill="#e6eef8" stroke="#9ab8e0"/><path d="M6 3.5 L12 7.5 L6 11.5Z" fill="#7aa8e0"/></svg>
<svg class="a" style="left:617px;top:809px;" width="34" height="12" viewBox="0 0 34 12"><rect x="0.5" y="0.5" width="10" height="4" fill="#fff" stroke="#555" stroke-width="1"/><rect x="23.5" y="0.5" width="10" height="10" fill="#fff" stroke="#555" stroke-width="1"/><line x1="23" y1="2.5" x2="34" y2="2.5" stroke="#555" stroke-width="1"/></svg>
<div class="a" style="left:639px;top:835px;width:16px;height:257px;background:linear-gradient(90deg,#ebebeb,#f3f3f3 50%,#ececec)"></div>
<svg class="a" style="left:639px;top:840px;" width="16" height="6" viewBox="0 0 16 6"><path d="M3.5 5 L8 0.5 L12.5 5Z" fill="#555"/></svg>
<svg class="a" style="left:639px;top:1081px;" width="16" height="6" viewBox="0 0 16 6"><path d="M3.5 0.5 L12.5 0.5 L8 5Z" fill="#555"/></svg>
<div class="a" style="left:640px;top:853px;width:14px;height:205px;border:1px solid #9a9a9a;border-radius:2px;background:linear-gradient(90deg,#f4f4f4,#e6e6e6 50%,#cfcfcf)"></div>
<svg class="a" style="left:643px;top:951px;" width="8" height="8" viewBox="0 0 8 8"><path d="M0 1.5 H8 M0 4 H8 M0 6.5 H8" stroke="#555" stroke-width="1"/></svg>
<div class="a" style="left:13px;top:830px;width:625px;height:263px;overflow:hidden"><svg style="position:absolute;left:-13px;top:-830px" width="700" height="1160" viewBox="0 0 700 1160"><circle cx="40" cy="864" r="6.6" fill="#60fb60"/><circle cx="62.5" cy="864" r="6.6" fill="#60fb60"/><circle cx="107.5" cy="864" r="6.6" fill="#60fb60"/><circle cx="130" cy="864" r="6.6" fill="#60fb60"/><circle cx="40" cy="902" r="6.6" fill="#60fb60"/><circle cx="62.5" cy="902" r="6.6" fill="#60fb60"/><circle cx="85" cy="902" r="6.6" fill="#60fb60"/><circle cx="107.5" cy="902" r="6.6" fill="#60fb60"/><circle cx="130" cy="902" r="6.6" fill="#60fb60"/><circle cx="40" cy="921" r="6.6" fill="#60fb60"/><circle cx="62.5" cy="921" r="6.6" fill="#60fb60"/><circle cx="85" cy="921" r="6.6" fill="#60fb60"/><circle cx="130" cy="921" r="6.6" fill="#60fb60"/><circle cx="40" cy="940" r="6.6" fill="#60fb60"/><circle cx="62.5" cy="940" r="6.6" fill="#60fb60"/><circle cx="130" cy="940" r="6.6" fill="#60fb60"/><circle cx="40" cy="958.5" r="6.6" fill="#60fb60"/><circle cx="40" cy="977.5" r="6.6" fill="#60fb60"/><circle cx="152.5" cy="940" r="6.6" fill="#ffbf00"/><circle cx="152.5" cy="958.5" r="6.6" fill="#ffbf00"/><circle cx="152.5" cy="977.5" r="6.6" fill="#ffbf00"/><path d="M40 883.5 H130" stroke="#000" stroke-width="1"/><circle cx="40" cy="883" r="6.6" fill="#8080fc"/><circle cx="62.5" cy="883" r="6.6" fill="#8080fc"/><circle cx="85" cy="883" r="6.6" fill="#8080fc"/><circle cx="107.5" cy="883" r="6.6" fill="#8080fc"/><circle cx="130" cy="883" r="6.6" fill="#8080fc"/><text x="40" y="998" font-size="8" text-anchor="middle" fill="#222" font-family="Liberation Sans">0</text><text x="62" y="998" font-size="8" text-anchor="middle" fill="#222" font-family="Liberation Sans">1</text><text x="85" y="998" font-size="8" text-anchor="middle" fill="#222" font-family="Liberation Sans">2</text><text x="107" y="998" font-size="8" text-anchor="middle" fill="#222" font-family="Liberation Sans">3</text><text x="130" y="998" font-size="8" text-anchor="middle" fill="#222" font-family="Liberation Sans">4</text><text x="147" y="998" font-size="8" text-anchor="middle" fill="#222" font-family="Liberation Sans">5</text><path d="M85 892 L106 1024" stroke="#000" stroke-width="1.1"/><circle cx="130" cy="1014.5" r="6.6" fill="#60fb60"/><circle cx="197.5" cy="1014.5" r="6.6" fill="#60fb60"/><path d="M107 1033.5 H190" stroke="#000" stroke-width="1"/><circle cx="107.5" cy="1033.5" r="6.6" fill="#8080fc"/><circle cx="130" cy="1033.5" r="6.6" fill="#8080fc"/><circle cx="152.5" cy="1033.5" r="6.6" fill="#8080fc"/><circle cx="175" cy="1033.5" r="6.6" fill="#8080fc"/><rect x="192" y="1027.5" width="11" height="10.5" rx="1.5" fill="#8080fc"/><rect x="189.5" y="1025.5" width="16" height="16" fill="none" stroke="#000" stroke-width="1" stroke-dasharray="1 2"/><rect x="188" y="1024" width="4" height="4" fill="#000"/><rect x="188" y="1031.5" width="4" height="4" fill="#000"/><rect x="188" y="1039" width="4" height="4" fill="#000"/><rect x="195.5" y="1024" width="4" height="4" fill="#000"/><rect x="195.5" y="1039" width="4" height="4" fill="#000"/><rect x="203" y="1024" width="4" height="4" fill="#000"/><rect x="203" y="1031.5" width="4" height="4" fill="#000"/><rect x="203" y="1039" width="4" height="4" fill="#000"/><circle cx="107.5" cy="1052.5" r="6.6" fill="#60fb60"/><circle cx="130" cy="1052.5" r="6.6" fill="#60fb60"/><circle cx="152.5" cy="1052.5" r="6.6" fill="#60fb60"/><circle cx="175" cy="1052.5" r="6.6" fill="#60fb60"/><circle cx="197.5" cy="1052.5" r="6.6" fill="#60fb60"/><circle cx="107.5" cy="1071" r="6.6" fill="#60fb60"/><circle cx="130" cy="1071" r="6.6" fill="#60fb60"/><circle cx="152.5" cy="1071" r="6.6" fill="#60fb60"/><circle cx="175" cy="1071" r="6.6" fill="#60fb60"/><circle cx="130" cy="1089.5" r="6.6" fill="#60fb60"/><circle cx="220.5" cy="1014.5" r="6.6" fill="#ffbf00"/><circle cx="220.5" cy="1033.5" r="6.6" fill="#ffbf00"/><circle cx="220.5" cy="1052.5" r="6.6" fill="#ffbf00"/><circle cx="220.5" cy="1071" r="6.6" fill="#ffbf00"/><circle cx="220.5" cy="1089.5" r="6.6" fill="#ffbf00"/></svg></div>
<div class="a tabact" style="left:667px;top:802px;width:94px;height:27px"></div>
<svg class="a" style="left:673px;top:808px;" width="15" height="15" viewBox="0 0 15 15"><rect x="0.5" y="0.5" width="14" height="10" rx="1.5" fill="#eef4fc" stroke="#2a5aa0" stroke-width="1.6"/><path d="M3.5 4 H8 M3.5 6.5 H11" stroke="#2a5aa0" stroke-width="1"/><path d="M4 13.5 H11" stroke="#2a5aa0" stroke-width="2"/></svg>
<div class="a t" style="left:691px;top:809.0px;height:14px;line-height:14px;font-size:11.2px;color:#000;font-weight:bold;font-family:'Liberation Sans',sans-serif;">Console</div>
<svg class="a" style="left:741px;top:810px;" width="12" height="12" viewBox="0 0 12 12"><path d="M1.5 0.5 H4 L6 2.8 L8 0.5 H10.5 V3 L8.3 5.5 L10.5 8 V10.5 H8 L6 8.2 L4 10.5 H1.5 V8 L3.7 5.5 L1.5 3Z" fill="#fff" stroke="#5e5e5e" stroke-width="1.1"/></svg>
<svg class="a" style="left:765px;top:810px;" width="15" height="13" viewBox="0 0 15 13"><path d="M0.5 11.5 H4.5 V3.5 H9.5 V11.5 H14" fill="none" stroke="#9a9a9a" stroke-width="1.6"/></svg>
<div class="a t" style="left:784px;top:808.5px;height:15px;line-height:15px;font-size:12px;color:#8a8a8a;font-weight:normal;font-family:'Liberation Sans',sans-serif;">Constraint View</div>
<svg class="a" style="left:1117px;top:807px;" width="15" height="16" viewBox="0 0 15 16"><rect x="0.5" y="0.5" width="10" height="13" fill="#f4f4f4" stroke="#999"/><path d="M2 3 H9 M2 5.5 H9 M2 8 H7" stroke="#aaa"/><path d="M9 10 L14 15 M14 10 L9 15" stroke="#777" stroke-width="1.5"/></svg>
<svg class="a" style="left:1139px;top:807px;" width="14" height="16" viewBox="0 0 14 16"><rect x="6.5" y="0.5" width="7" height="15" fill="#eee" stroke="#999"/><rect x="0.5" y="8.5" width="7" height="6" rx="1" fill="#e8c048" stroke="#a88018"/><path d="M2 8.5 V6 Q4 3 6 6 V8.5" fill="none" stroke="#999"/></svg>
<div class="a" style="left:1161px;top:807px;width:1px;height:17px;background:#888"></div>
<svg class="a" style="left:1170px;top:807px;" width="16" height="16" viewBox="0 0 16 16"><rect x="0.5" y="4.5" width="13" height="11" fill="#f4f8fc" stroke="#4a6a9a"/><rect x="0.5" y="4.5" width="13" height="3" fill="#5a8ad0"/><path d="M6 11 L11 5" stroke="#2a9a30" stroke-width="2"/><circle cx="12" cy="4" r="2.5" fill="#3ab040"/></svg>
<svg class="a" style="left:1195px;top:807px;" width="15" height="15" viewBox="0 0 15 15"><rect x="0.5" y="0.5" width="14" height="10" rx="1.5" fill="#eef4fc" stroke="#2a5aa0" stroke-width="1.6"/><path d="M3.5 4 H8 M3.5 6.5 H11" stroke="#2a5aa0" stroke-width="1"/><path d="M4 13.5 H11" stroke="#2a5aa0" stroke-width="2"/></svg>
<svg class="a" style="left:1217px;top:813px;" width="8" height="5" viewBox="0 0 8 5"><path d="M0 0 L8 0 L4 4.5 Z" fill="#222"/></svg>
<svg class="a" style="left:1233px;top:806px;" width="16" height="17" viewBox="0 0 16 17"><rect x="0.5" y="4.5" width="13" height="12" fill="#f4f4f0" stroke="#8a8a70"/><rect x="0.5" y="4.5" width="13" height="3" fill="#8ab8e8"/><path d="M12 0 V6 M9 3 H15" stroke="#e8b830" stroke-width="2"/></svg>
<svg class="a" style="left:1255px;top:813px;" width="8" height="5" viewBox="0 0 8 5"><path d="M0 0 L8 0 L4 4.5 Z" fill="#222"/></svg>
<svg class="a" style="left:1272px;top:809px;" width="34" height="12" viewBox="0 0 34 12"><rect x="0.5" y="0.5" width="10" height="4" fill="#fff" stroke="#555" stroke-width="1"/><rect x="23.5" y="0.5" width="10" height="10" fill="#fff" stroke="#555" stroke-width="1"/><line x1="23" y1="2.5" x2="34" y2="2.5" stroke="#555" stroke-width="1"/></svg>
<div class="a t" style="left:671px;top:830.5px;height:15px;line-height:15px;font-size:12px;color:#000;font-weight:normal;font-family:'Liberation Sans',sans-serif;">Default MessagingSystem console</div>
<div class="a" style="left:669px;top:845px;width:650px;height:1px;background:#a8a8a8"></div>
<div class="a" style="left:669px;top:846px;width:632px;height:258px;overflow:hidden">
<div class="a t" style="left:4px;top:1px;height:16px;line-height:16px;font-size:11.62px;font-family:Liberation Mono">vcdFromSimu.vcd F/org.gemoc.sample.tfsm.single_traffic_light_sample/gemoc-gen/execution/exec</div>
<div class="a t" style="left:4px;top:16px;height:16px;line-height:16px;font-size:11.62px;font-family:Liberation Mono">[FSMClockImpl:minutes.ticks()]New number of ticks : 1</div>
<div class="a t" style="left:4px;top:31px;height:16px;line-height:16px;font-size:11.62px;font-family:Liberation Mono">[FSMClockImpl:minutes.ticks()]New number of ticks : 2</div>
<div class="a t" style="left:4px;top:46px;height:16px;line-height:16px;font-size:11.62px;font-family:Liberation Mono">[TransitionImpl:initSemaphore_to_Red.fire()]Fired initSemaphore_to_Red -&gt; dosomething</div>
<div class="a t" style="left:4px;top:61px;height:16px;line-height:16px;font-size:11.62px;font-family:Liberation Mono">[FSMClockImpl:minutes.ticks()]New number of ticks : 3</div>
<div class="a t" style="left:4px;top:76px;height:16px;line-height:16px;font-size:11.62px;font-family:Liberation Mono">[FSMClockImpl:minutes.ticks()]New number of ticks : 4</div>
<div class="a t" style="left:4px;top:91px;height:16px;line-height:16px;font-size:11.62px;font-family:Liberation Mono">[FSMClockImpl:minutes.ticks()]New number of ticks : 5</div>
<div class="a t" style="left:4px;top:106px;height:16px;line-height:16px;font-size:11.62px;font-family:Liberation Mono">[TransitionImpl:Red_to_Green.fire()]Fired Red_to_Green -&gt; doGreen</div>
<div class="a t" style="left:4px;top:121px;height:16px;line-height:16px;font-size:11.62px;font-family:Liberation Mono">Begin setting tfsmextended.impl.FSMClockImpl@4d4a5f4f (name: minutes) (numberOfTicks: 5).numb</div>
<div class="a t" style="left:4px;top:136px;height:16px;line-height:16px;font-size:11.62px;font-family:Liberation Mono">End setting tfsmextended.impl.FSMClockImpl@4d4a5f4f (name: minutes) (numberOfTicks: 3).numberOf</div>
<div class="a t" style="left:4px;top:151px;height:16px;line-height:16px;font-size:11.62px;font-family:Liberation Mono">[FSMClockImpl:minutes.ticks()]New number of ticks : 4</div>
<div class="a t" style="left:4px;top:166px;height:16px;line-height:16px;font-size:11.62px;font-family:Liberation Mono">[FSMClockImpl:minutes.ticks()]New number of ticks : 5</div>
<div class="a t" style="left:4px;top:181px;height:16px;line-height:16px;font-size:11.62px;font-family:Liberation Mono">[TransitionImpl:Red_to_Green.fire()]Fired Red_to_Green -&gt; doGreen</div>
<div class="a t" style="left:4px;top:196px;height:16px;line-height:16px;font-size:11.62px;font-family:Liberation Mono">[FSMClockImpl:minutes.ticks()]New number of ticks : 6</div>
<div class="a t" style="left:4px;top:211px;height:16px;line-height:16px;font-size:11.62px;font-family:Liberation Mono">[FSMClockImpl:minutes.ticks()]New number of ticks : 7</div>
<div class="a t" style="left:4px;top:226px;height:16px;line-height:16px;font-size:11.62px;font-family:Liberation Mono">[FSMClockImpl:minutes.ticks()]New number of ticks : 8</div>
</div>
<div class="a" style="left:1301px;top:847px;width:16px;height:256px;background:linear-gradient(90deg,#ebebeb,#f3f3f3 50%,#ececec)"></div>
<svg class="a" style="left:1301px;top:852px;" width="16" height="6" viewBox="0 0 16 6"><path d="M3.5 5 L8 0.5 L12.5 5Z" fill="#555"/></svg>
<svg class="a" style="left:1301px;top:1092px;" width="16" height="6" viewBox="0 0 16 6"><path d="M3.5 0.5 L12.5 0.5 L8 5Z" fill="#555"/></svg>
<div class="a" style="left:1302px;top:887px;width:14px;height:187px;border:1px solid #9a9a9a;border-radius:2px;background:linear-gradient(90deg,#f4f4f4,#e6e6e6 50%,#cfcfcf)"></div>
<svg class="a" style="left:1305px;top:976px;" width="8" height="8" viewBox="0 0 8 8"><path d="M0 1.5 H8 M0 4 H8 M0 6.5 H8" stroke="#555" stroke-width="1"/></svg>
<div class="a" style="left:669px;top:1104px;width:632px;height:16px;background:linear-gradient(180deg,#ebebeb,#f3f3f3 50%,#ececec)"></div>
<svg class="a" style="left:674px;top:1104px;" width="6" height="16" viewBox="0 0 6 16"><path d="M5 3.5 L0.5 8 L5 12.5Z" fill="#333"/></svg>
<svg class="a" style="left:1290px;top:1104px;" width="6" height="16" viewBox="0 0 6 16"><path d="M0.5 3.5 L5 8 L0.5 12.5Z" fill="#333"/></svg>
<div class="a" style="left:685px;top:1105px;width:472px;height:14px;border:1px solid #9a9a9a;border-radius:2px;background:linear-gradient(180deg,#f4f4f4,#e6e6e6 50%,#cfcfcf)"></div>
<svg class="a" style="left:917px;top:1108px;" width="8" height="8" viewBox="0 0 8 8"><path d="M1.5 0 V8 M4 0 V8 M6.5 0 V8" stroke="#555" stroke-width="1"/></svg>
<div class="a" style="left:1301px;top:1103px;width:16px;height:17px;background:#efefef"></div>
<div class="a" style="left:219px;top:1076px;width:569px;height:77px;background:#ffffe1;border:1px solid #767676;border-bottom:none"></div>
<div class="a t" style="left:220px;top:1077.5px;height:15px;line-height:15px;font-size:11.62px;color:#000;font-weight:normal;font-family:'Liberation Mono',monospace;">MSE_minutes_ticks</div>
<div class="a t" style="left:220px;top:1092.5px;height:15px;line-height:15px;font-size:11.62px;color:#000;font-weight:normal;font-family:'Liberation Mono',monospace;">MSE_Semaphore_stall</div>
<div class="a t" style="left:220px;top:1107.5px;height:15px;line-height:15px;font-size:11.62px;color:#000;font-weight:normal;font-family:'Liberation Mono',monospace;">MSE_Green_to_Red_fire</div>
<div class="a t" style="left:220px;top:1122.5px;height:15px;line-height:15px;font-size:11.62px;color:#000;font-weight:normal;font-family:'Liberation Mono',monospace;">MSE_Green_leaving</div>
<div class="a t" style="left:570px;top:1077.5px;height:15px;line-height:15px;font-size:11.62px;color:#000;font-weight:normal;font-family:'Liberation Mono',monospace;">FSMClock-&gt;minutes.ticks()</div>
<div class="a t" style="left:570px;top:1107.5px;height:15px;line-height:15px;font-size:11.62px;color:#000;font-weight:normal;font-family:'Liberation Mono',monospace;">Transition-&gt;Green_to_Red.fire()</div>
</body></html>
